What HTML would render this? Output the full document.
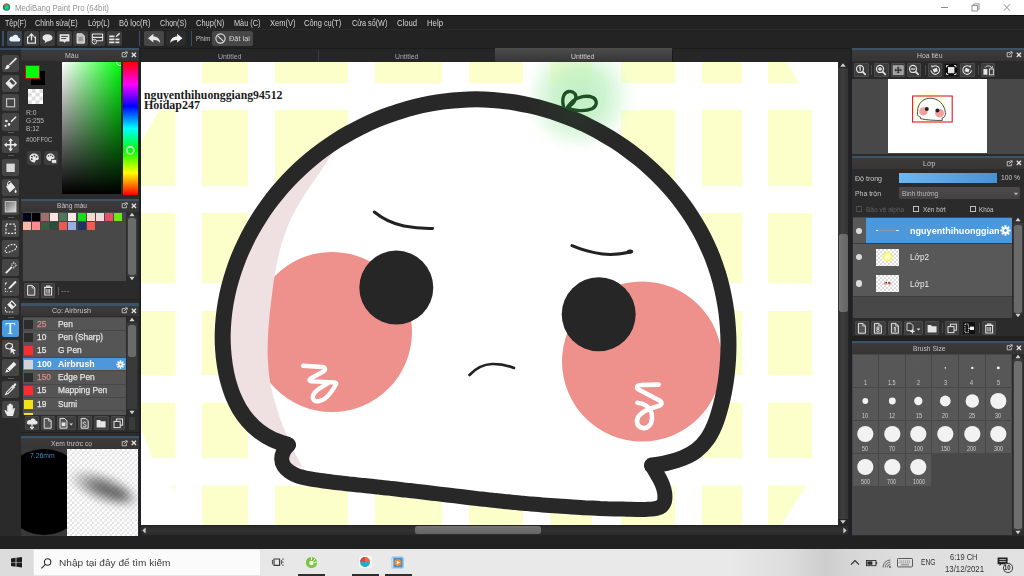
<!DOCTYPE html>
<html><head><meta charset="utf-8"><title>MediBang Paint Pro</title>
<style>
html,body{margin:0;padding:0;background:#222;}
body{width:1024px;height:576px;overflow:hidden;font-family:"Liberation Sans",sans-serif;}
#root{position:relative;width:1024px;height:576px;overflow:hidden;background:#222222;}
.a{position:absolute;}
.t{position:absolute;white-space:nowrap;line-height:1;}
svg{position:absolute;overflow:visible;}

</style></head>
<body>
<div id="root">
<svg class="a" style="left:0;top:0" width="1024" height="576" viewBox="0 0 1024 576">
<defs>
<clipPath id="cv"><rect x="141" y="62" width="697" height="463"/></clipPath>
<clipPath id="yc"><polygon points="190,62 787,62 816,112 830,200 830,440 806.4,485.5 781.2,525 180,525 175,489 170,485.5 152,457 141,429 141,141.7 158.8,110.4 176.4,83"/></clipPath>
<radialGradient id="glow" cx="0.5" cy="0.5" r="0.5"><stop offset="0" stop-color="#c8f5ca" stop-opacity="0.85"/><stop offset="0.42" stop-color="#ccf6ce" stop-opacity="0.78"/><stop offset="0.68" stop-color="#d0f7d2" stop-opacity="0.42"/><stop offset="0.88" stop-color="#d6f8d8" stop-opacity="0.1"/><stop offset="1" stop-color="#d8f8da" stop-opacity="0"/></radialGradient>
<radialGradient id="glow2" cx="0.5" cy="0.5" r="0.5"><stop offset="0" stop-color="#28a03a" stop-opacity="0.10"/><stop offset="0.5" stop-color="#28a03a" stop-opacity="0.06"/><stop offset="1" stop-color="#28a03a" stop-opacity="0"/></radialGradient>
</defs>
<g clip-path="url(#cv)">
<rect x="141" y="62" width="697" height="463" fill="#ffffff"/>
<g clip-path="url(#yc)" fill="#fdffcb">
<rect x="141.0" y="62.0" width="34.5" height="21.0"/>
<rect x="141.0" y="110.0" width="34.5" height="76.0"/>
<rect x="141.0" y="213.0" width="34.5" height="70.0"/>
<rect x="141.0" y="311.0" width="34.5" height="64.0"/>
<rect x="141.0" y="402.5" width="34.5" height="55.5"/>
<rect x="141.0" y="485.5" width="34.5" height="39.5"/>
<rect x="202.0" y="62.0" width="46.0" height="21.0"/>
<rect x="202.0" y="110.0" width="46.0" height="76.0"/>
<rect x="202.0" y="213.0" width="46.0" height="70.0"/>
<rect x="202.0" y="311.0" width="46.0" height="64.0"/>
<rect x="202.0" y="402.5" width="46.0" height="55.5"/>
<rect x="202.0" y="485.5" width="46.0" height="39.5"/>
<rect x="275.0" y="62.0" width="73.0" height="21.0"/>
<rect x="275.0" y="110.0" width="73.0" height="76.0"/>
<rect x="275.0" y="213.0" width="73.0" height="70.0"/>
<rect x="275.0" y="311.0" width="73.0" height="64.0"/>
<rect x="275.0" y="402.5" width="73.0" height="55.5"/>
<rect x="275.0" y="485.5" width="73.0" height="39.5"/>
<rect x="375.0" y="62.0" width="67.0" height="21.0"/>
<rect x="375.0" y="110.0" width="67.0" height="76.0"/>
<rect x="375.0" y="213.0" width="67.0" height="70.0"/>
<rect x="375.0" y="311.0" width="67.0" height="64.0"/>
<rect x="375.0" y="402.5" width="67.0" height="55.5"/>
<rect x="375.0" y="485.5" width="67.0" height="39.5"/>
<rect x="469.0" y="62.0" width="54.0" height="21.0"/>
<rect x="469.0" y="110.0" width="54.0" height="76.0"/>
<rect x="469.0" y="213.0" width="54.0" height="70.0"/>
<rect x="469.0" y="311.0" width="54.0" height="64.0"/>
<rect x="469.0" y="402.5" width="54.0" height="55.5"/>
<rect x="469.0" y="485.5" width="54.0" height="39.5"/>
<rect x="550.0" y="62.0" width="42.0" height="21.0"/>
<rect x="550.0" y="110.0" width="42.0" height="76.0"/>
<rect x="550.0" y="213.0" width="42.0" height="70.0"/>
<rect x="550.0" y="311.0" width="42.0" height="64.0"/>
<rect x="550.0" y="402.5" width="42.0" height="55.5"/>
<rect x="550.0" y="485.5" width="42.0" height="39.5"/>
<rect x="621.0" y="62.0" width="54.0" height="21.0"/>
<rect x="621.0" y="110.0" width="54.0" height="76.0"/>
<rect x="621.0" y="213.0" width="54.0" height="70.0"/>
<rect x="621.0" y="311.0" width="54.0" height="64.0"/>
<rect x="621.0" y="402.5" width="54.0" height="55.5"/>
<rect x="621.0" y="485.5" width="54.0" height="39.5"/>
<rect x="702.0" y="62.0" width="40.0" height="21.0"/>
<rect x="702.0" y="110.0" width="40.0" height="76.0"/>
<rect x="702.0" y="213.0" width="40.0" height="70.0"/>
<rect x="702.0" y="311.0" width="40.0" height="64.0"/>
<rect x="702.0" y="402.5" width="40.0" height="55.5"/>
<rect x="702.0" y="485.5" width="40.0" height="39.5"/>
<rect x="768.0" y="62.0" width="44.0" height="21.0"/>
<rect x="768.0" y="110.0" width="44.0" height="76.0"/>
<rect x="768.0" y="213.0" width="44.0" height="70.0"/>
<rect x="768.0" y="311.0" width="44.0" height="64.0"/>
<rect x="768.0" y="402.5" width="44.0" height="55.5"/>
<rect x="768.0" y="485.5" width="44.0" height="39.5"/>
</g>
<path d="M288.0,445.0 C285.4,444.1 277.4,441.7 272.6,439.5 C267.8,437.2 263.2,434.4 259.2,431.4 C255.1,428.3 251.4,424.7 248.2,421.0 C244.9,417.2 242.0,413.1 239.4,408.8 C236.9,404.5 234.7,399.8 232.7,395.1 C230.8,390.4 229.3,385.4 227.9,380.4 C226.6,375.4 225.6,370.3 224.8,365.1 C224.0,360.0 223.4,354.7 223.1,349.5 C222.7,344.4 222.6,339.1 222.7,333.9 C222.8,328.8 223.1,323.6 223.6,318.4 C224.1,313.2 224.8,308.0 225.7,302.9 C226.6,297.8 227.7,292.7 228.9,287.7 C230.2,282.6 231.6,277.6 233.2,272.7 C234.8,267.7 236.6,262.8 238.5,258.0 C240.4,253.2 242.5,248.4 244.8,243.8 C247.0,239.1 249.3,234.5 251.9,230.0 C254.4,225.5 257.0,221.1 259.8,216.8 C262.6,212.4 265.5,208.2 268.5,204.1 C271.6,199.9 274.7,195.9 278.0,192.0 C281.3,188.0 284.7,184.2 288.2,180.5 C291.8,176.7 295.4,173.1 299.1,169.6 C302.9,166.1 306.8,162.7 310.7,159.4 C314.7,156.1 318.8,152.9 322.9,149.9 C327.1,146.8 331.4,143.9 335.7,141.1 C340.1,138.3 344.5,135.6 349.1,133.1 C353.6,130.6 358.2,128.1 362.9,125.9 C367.6,123.6 372.4,121.4 377.2,119.4 C382.0,117.4 386.9,115.6 391.9,113.9 C396.8,112.1 401.8,110.6 406.8,109.1 C411.8,107.7 416.9,106.4 422.0,105.3 C427.1,104.2 432.3,103.2 437.4,102.4 C442.6,101.6 447.8,101.0 452.9,100.5 C458.1,100.0 463.3,99.7 468.5,99.5 C473.7,99.3 478.9,99.3 484.1,99.5 C489.2,99.7 494.4,100.0 499.6,100.6 C504.7,101.1 509.8,101.7 514.9,102.5 C520.0,103.4 525.1,104.4 530.2,105.5 C535.2,106.6 540.2,107.9 545.2,109.4 C550.2,110.8 555.1,112.4 560.0,114.1 C564.8,115.8 569.7,117.7 574.4,119.7 C579.2,121.7 583.9,123.9 588.5,126.1 C593.2,128.4 597.8,130.8 602.2,133.4 C606.7,135.9 611.2,138.6 615.5,141.4 C619.8,144.2 624.1,147.1 628.3,150.2 C632.4,153.2 636.5,156.4 640.5,159.7 C644.5,163.0 648.3,166.4 652.1,169.9 C655.9,173.4 659.5,177.0 663.1,180.7 C666.6,184.4 670.1,188.3 673.4,192.2 C676.7,196.1 679.9,200.2 682.9,204.3 C686.0,208.4 688.9,212.7 691.7,217.0 C694.5,221.3 697.1,225.7 699.6,230.2 C702.1,234.7 704.5,239.3 706.6,244.0 C708.8,248.6 710.9,253.4 712.8,258.2 C714.6,263.1 716.3,268.0 717.9,272.9 C719.4,277.9 720.8,283.0 722.0,288.1 C723.2,293.2 724.2,298.4 725.1,303.6 C726.0,308.8 726.7,314.0 727.2,319.2 C727.7,324.5 728.1,329.8 728.3,335.0 C728.5,340.3 728.5,345.6 728.4,350.8 C728.3,356.1 728.0,361.4 727.5,366.6 C727.1,371.8 726.5,376.9 725.7,382.1 C724.9,387.2 724.0,392.3 722.9,397.3 C721.8,402.3 720.6,407.2 719.1,412.1 C717.7,416.9 716.2,421.7 714.2,426.2 C712.2,430.7 710.1,435.1 707.2,439.1 C704.4,443.0 701.2,446.8 697.1,449.9 C693.1,453.1 688.0,455.8 682.9,458.0 C677.8,460.1 671.6,461.8 666.4,463.0 C661.3,464.3 654.4,465.1 652.0,465.5 L652.0,465.5 C652.6,466.6 654.5,469.9 655.8,472.1 C657.1,474.3 658.4,476.5 659.6,478.7 C660.8,481.0 661.9,483.2 662.8,485.6 C663.6,488.0 664.4,490.6 664.7,493.2 C665.0,495.8 665.1,498.9 664.5,501.2 C663.8,503.4 662.5,505.5 660.7,506.7 C658.9,508.0 656.2,508.5 653.6,508.9 C651.1,509.3 648.1,509.3 645.4,509.4 C642.8,509.5 640.1,509.5 637.6,509.4 C635.0,509.4 632.5,509.4 630.0,509.3 C627.5,509.3 625.0,509.2 622.5,509.1 C620.0,509.1 617.4,509.0 614.9,508.9 C612.4,508.8 609.9,508.7 607.4,508.7 C604.8,508.6 602.3,508.5 599.8,508.4 C597.2,508.2 594.7,508.1 592.2,508.0 C589.6,507.9 587.1,507.8 584.6,507.7 C582.0,507.5 579.5,507.4 576.9,507.2 C574.4,507.1 571.8,507.0 569.3,506.8 C566.7,506.7 564.2,506.5 561.6,506.3 C559.1,506.2 556.5,506.0 554.0,505.8 C551.4,505.6 548.9,505.4 546.3,505.2 C543.8,505.0 541.2,504.8 538.7,504.6 C536.1,504.4 533.6,504.2 531.1,504.0 C528.5,503.8 526.0,503.5 523.4,503.3 C520.9,503.1 518.3,502.8 515.8,502.6 C513.3,502.3 510.7,502.1 508.2,501.8 C505.6,501.6 503.1,501.3 500.6,501.1 C498.0,500.8 495.5,500.5 493.0,500.3 C490.4,500.0 487.9,499.7 485.3,499.4 C482.8,499.1 480.3,498.9 477.7,498.6 C475.2,498.3 472.7,498.0 470.1,497.7 C467.6,497.4 465.1,497.1 462.5,496.8 C460.0,496.5 457.5,496.2 455.0,495.9 C452.4,495.6 449.9,495.3 447.4,495.0 C444.8,494.7 442.3,494.4 439.8,494.1 C437.3,493.8 434.7,493.5 432.2,493.2 C429.7,492.9 427.1,492.6 424.6,492.3 C422.1,492.0 419.6,491.7 417.0,491.4 C414.5,491.1 412.0,490.8 409.4,490.5 C406.9,490.2 404.4,490.0 401.9,489.7 C399.3,489.4 396.8,489.1 394.3,488.8 C391.8,488.5 389.2,488.2 386.7,487.9 C384.2,487.7 381.7,487.4 379.1,487.1 C376.6,486.8 374.1,486.6 371.6,486.3 C369.0,486.1 366.5,485.8 364.0,485.5 C361.4,485.3 358.9,485.0 356.4,484.8 C353.9,484.5 351.3,484.2 348.8,484.0 C346.3,483.7 343.7,483.4 341.2,483.1 C338.7,482.9 336.1,482.6 333.6,482.3 C331.0,481.9 328.5,481.6 326.0,481.3 C323.4,480.9 320.9,480.6 318.3,480.2 C315.8,479.8 313.2,479.4 310.7,479.0 C308.1,478.5 305.5,478.1 303.1,477.4 C300.6,476.8 298.1,476.1 295.8,475.1 C293.5,474.1 291.3,473.0 289.3,471.5 C287.3,470.0 285.2,468.2 283.9,466.1 C282.6,464.0 281.7,461.4 281.7,459.0 C281.6,456.5 282.6,453.6 283.6,451.3 C284.7,449.0 287.3,446.0 288.0,445.0Z" fill="#ffffff"/>
<defs><clipPath id="bodyclip"><path d="M288.0,445.0 C285.4,444.1 277.4,441.7 272.6,439.5 C267.8,437.2 263.2,434.4 259.2,431.4 C255.1,428.3 251.4,424.7 248.2,421.0 C244.9,417.2 242.0,413.1 239.4,408.8 C236.9,404.5 234.7,399.8 232.7,395.1 C230.8,390.4 229.3,385.4 227.9,380.4 C226.6,375.4 225.6,370.3 224.8,365.1 C224.0,360.0 223.4,354.7 223.1,349.5 C222.7,344.4 222.6,339.1 222.7,333.9 C222.8,328.8 223.1,323.6 223.6,318.4 C224.1,313.2 224.8,308.0 225.7,302.9 C226.6,297.8 227.7,292.7 228.9,287.7 C230.2,282.6 231.6,277.6 233.2,272.7 C234.8,267.7 236.6,262.8 238.5,258.0 C240.4,253.2 242.5,248.4 244.8,243.8 C247.0,239.1 249.3,234.5 251.9,230.0 C254.4,225.5 257.0,221.1 259.8,216.8 C262.6,212.4 265.5,208.2 268.5,204.1 C271.6,199.9 274.7,195.9 278.0,192.0 C281.3,188.0 284.7,184.2 288.2,180.5 C291.8,176.7 295.4,173.1 299.1,169.6 C302.9,166.1 306.8,162.7 310.7,159.4 C314.7,156.1 318.8,152.9 322.9,149.9 C327.1,146.8 331.4,143.9 335.7,141.1 C340.1,138.3 344.5,135.6 349.1,133.1 C353.6,130.6 358.2,128.1 362.9,125.9 C367.6,123.6 372.4,121.4 377.2,119.4 C382.0,117.4 386.9,115.6 391.9,113.9 C396.8,112.1 401.8,110.6 406.8,109.1 C411.8,107.7 416.9,106.4 422.0,105.3 C427.1,104.2 432.3,103.2 437.4,102.4 C442.6,101.6 447.8,101.0 452.9,100.5 C458.1,100.0 463.3,99.7 468.5,99.5 C473.7,99.3 478.9,99.3 484.1,99.5 C489.2,99.7 494.4,100.0 499.6,100.6 C504.7,101.1 509.8,101.7 514.9,102.5 C520.0,103.4 525.1,104.4 530.2,105.5 C535.2,106.6 540.2,107.9 545.2,109.4 C550.2,110.8 555.1,112.4 560.0,114.1 C564.8,115.8 569.7,117.7 574.4,119.7 C579.2,121.7 583.9,123.9 588.5,126.1 C593.2,128.4 597.8,130.8 602.2,133.4 C606.7,135.9 611.2,138.6 615.5,141.4 C619.8,144.2 624.1,147.1 628.3,150.2 C632.4,153.2 636.5,156.4 640.5,159.7 C644.5,163.0 648.3,166.4 652.1,169.9 C655.9,173.4 659.5,177.0 663.1,180.7 C666.6,184.4 670.1,188.3 673.4,192.2 C676.7,196.1 679.9,200.2 682.9,204.3 C686.0,208.4 688.9,212.7 691.7,217.0 C694.5,221.3 697.1,225.7 699.6,230.2 C702.1,234.7 704.5,239.3 706.6,244.0 C708.8,248.6 710.9,253.4 712.8,258.2 C714.6,263.1 716.3,268.0 717.9,272.9 C719.4,277.9 720.8,283.0 722.0,288.1 C723.2,293.2 724.2,298.4 725.1,303.6 C726.0,308.8 726.7,314.0 727.2,319.2 C727.7,324.5 728.1,329.8 728.3,335.0 C728.5,340.3 728.5,345.6 728.4,350.8 C728.3,356.1 728.0,361.4 727.5,366.6 C727.1,371.8 726.5,376.9 725.7,382.1 C724.9,387.2 724.0,392.3 722.9,397.3 C721.8,402.3 720.6,407.2 719.1,412.1 C717.7,416.9 716.2,421.7 714.2,426.2 C712.2,430.7 710.1,435.1 707.2,439.1 C704.4,443.0 701.2,446.8 697.1,449.9 C693.1,453.1 688.0,455.8 682.9,458.0 C677.8,460.1 671.6,461.8 666.4,463.0 C661.3,464.3 654.4,465.1 652.0,465.5 L652.0,465.5 C652.6,466.6 654.5,469.9 655.8,472.1 C657.1,474.3 658.4,476.5 659.6,478.7 C660.8,481.0 661.9,483.2 662.8,485.6 C663.6,488.0 664.4,490.6 664.7,493.2 C665.0,495.8 665.1,498.9 664.5,501.2 C663.8,503.4 662.5,505.5 660.7,506.7 C658.9,508.0 656.2,508.5 653.6,508.9 C651.1,509.3 648.1,509.3 645.4,509.4 C642.8,509.5 640.1,509.5 637.6,509.4 C635.0,509.4 632.5,509.4 630.0,509.3 C627.5,509.3 625.0,509.2 622.5,509.1 C620.0,509.1 617.4,509.0 614.9,508.9 C612.4,508.8 609.9,508.7 607.4,508.7 C604.8,508.6 602.3,508.5 599.8,508.4 C597.2,508.2 594.7,508.1 592.2,508.0 C589.6,507.9 587.1,507.8 584.6,507.7 C582.0,507.5 579.5,507.4 576.9,507.2 C574.4,507.1 571.8,507.0 569.3,506.8 C566.7,506.7 564.2,506.5 561.6,506.3 C559.1,506.2 556.5,506.0 554.0,505.8 C551.4,505.6 548.9,505.4 546.3,505.2 C543.8,505.0 541.2,504.8 538.7,504.6 C536.1,504.4 533.6,504.2 531.1,504.0 C528.5,503.8 526.0,503.5 523.4,503.3 C520.9,503.1 518.3,502.8 515.8,502.6 C513.3,502.3 510.7,502.1 508.2,501.8 C505.6,501.6 503.1,501.3 500.6,501.1 C498.0,500.8 495.5,500.5 493.0,500.3 C490.4,500.0 487.9,499.7 485.3,499.4 C482.8,499.1 480.3,498.9 477.7,498.6 C475.2,498.3 472.7,498.0 470.1,497.7 C467.6,497.4 465.1,497.1 462.5,496.8 C460.0,496.5 457.5,496.2 455.0,495.9 C452.4,495.6 449.9,495.3 447.4,495.0 C444.8,494.7 442.3,494.4 439.8,494.1 C437.3,493.8 434.7,493.5 432.2,493.2 C429.7,492.9 427.1,492.6 424.6,492.3 C422.1,492.0 419.6,491.7 417.0,491.4 C414.5,491.1 412.0,490.8 409.4,490.5 C406.9,490.2 404.4,490.0 401.9,489.7 C399.3,489.4 396.8,489.1 394.3,488.8 C391.8,488.5 389.2,488.2 386.7,487.9 C384.2,487.7 381.7,487.4 379.1,487.1 C376.6,486.8 374.1,486.6 371.6,486.3 C369.0,486.1 366.5,485.8 364.0,485.5 C361.4,485.3 358.9,485.0 356.4,484.8 C353.9,484.5 351.3,484.2 348.8,484.0 C346.3,483.7 343.7,483.4 341.2,483.1 C338.7,482.9 336.1,482.6 333.6,482.3 C331.0,481.9 328.5,481.6 326.0,481.3 C323.4,480.9 320.9,480.6 318.3,480.2 C315.8,479.8 313.2,479.4 310.7,479.0 C308.1,478.5 305.5,478.1 303.1,477.4 C300.6,476.8 298.1,476.1 295.8,475.1 C293.5,474.1 291.3,473.0 289.3,471.5 C287.3,470.0 285.2,468.2 283.9,466.1 C282.6,464.0 281.7,461.4 281.7,459.0 C281.6,456.5 282.6,453.6 283.6,451.3 C284.7,449.0 287.3,446.0 288.0,445.0Z"/></clipPath></defs>
<g clip-path="url(#bodyclip)">
<circle cx="332" cy="332" r="80" fill="#ee918c"/>
<circle cx="642" cy="361.5" r="80" fill="#ee918c"/>
<path d="M340.0,140.0 C339.0,141.7 336.1,147.0 334.0,150.5 C331.9,153.9 329.8,157.4 327.6,160.8 C325.4,164.2 323.1,167.5 320.8,170.9 C318.5,174.2 316.2,177.6 313.9,180.9 C311.6,184.3 309.3,187.7 307.1,191.1 C304.8,194.4 302.6,197.8 300.5,201.3 C298.5,204.8 296.4,208.2 294.5,211.8 C292.7,215.3 290.9,218.9 289.3,222.5 C287.7,226.2 286.2,229.9 284.9,233.7 C283.5,237.4 282.3,241.3 281.2,245.1 C280.1,249.0 279.2,252.9 278.3,256.8 C277.4,260.8 276.6,264.7 275.8,268.7 C275.1,272.7 274.4,276.7 273.8,280.8 C273.2,284.8 272.7,288.8 272.2,292.9 C271.7,296.9 271.2,301.0 270.7,305.0 C270.3,309.1 269.8,313.1 269.4,317.2 C269.1,321.2 268.7,325.3 268.4,329.3 C268.1,333.3 267.9,337.3 267.8,341.4 C267.6,345.4 267.6,349.4 267.6,353.4 C267.7,357.4 267.9,361.4 268.2,365.4 C268.5,369.4 268.9,373.4 269.4,377.4 C270.0,381.3 270.7,385.3 271.6,389.3 C272.4,393.2 273.4,397.2 274.5,401.1 C275.6,405.0 276.8,408.9 278.1,412.8 C279.4,416.7 280.8,420.5 282.2,424.3 C283.7,428.1 285.3,431.9 286.9,435.6 C288.5,439.4 290.2,443.1 292.0,446.7 C293.7,450.4 295.5,454.0 297.3,457.5 C299.2,461.1 302.1,466.3 303.0,468.0 L282.0,462.0 C282.2,460.3 282.4,454.8 283.4,452.0 C284.4,449.2 289.8,447.1 288.0,445.0 C286.2,442.9 277.4,441.7 272.6,439.5 C267.8,437.2 263.2,434.4 259.2,431.4 C255.1,428.3 251.4,424.7 248.2,421.0 C244.9,417.2 242.0,413.1 239.4,408.8 C236.9,404.5 234.7,399.8 232.7,395.1 C230.8,390.4 229.3,385.4 227.9,380.4 C226.6,375.4 225.6,370.3 224.8,365.1 C224.0,360.0 223.4,354.7 223.1,349.5 C222.7,344.4 222.6,339.1 222.7,333.9 C222.8,328.8 223.1,323.6 223.6,318.4 C224.1,313.2 224.8,308.0 225.7,302.9 C226.6,297.8 227.7,292.7 228.9,287.7 C230.2,282.6 231.6,277.6 233.2,272.7 C234.8,267.7 236.6,262.8 238.5,258.0 C240.4,253.2 242.5,248.4 244.8,243.8 C247.0,239.1 249.3,234.5 251.9,230.0 C254.4,225.5 257.0,221.1 259.8,216.8 C262.6,212.4 265.5,208.2 268.5,204.1 C271.6,199.9 274.7,195.9 278.0,192.0 C281.3,188.0 284.7,184.2 288.2,180.5 C291.8,176.7 295.4,173.1 299.1,169.6 C302.9,166.1 306.8,162.7 310.7,159.4 C314.7,156.1 318.8,152.9 322.9,149.9 C327.1,146.8 331.4,143.9 335.7,141.1 C340.1,138.3 344.5,135.6 349.1,133.1 C353.6,130.6 358.2,128.1 362.9,125.9 C367.6,123.6 372.4,121.4 377.2,119.4 C382.0,117.4 386.9,115.6 391.9,113.9 C396.8,112.1 401.8,110.6 406.8,109.1 C411.8,107.7 416.9,106.4 422.0,105.3 C427.1,104.2 434.9,102.9 437.4,102.4Z" fill="#efe0e2"/>
</g>
<circle cx="580" cy="95" r="60" fill="url(#glow)"/>
<path d="M288.0,445.0 C285.4,444.1 277.4,441.7 272.6,439.5 C267.8,437.2 263.2,434.4 259.2,431.4 C255.1,428.3 251.4,424.7 248.2,421.0 C244.9,417.2 242.0,413.1 239.4,408.8 C236.9,404.5 234.7,399.8 232.7,395.1 C230.8,390.4 229.3,385.4 227.9,380.4 C226.6,375.4 225.6,370.3 224.8,365.1 C224.0,360.0 223.4,354.7 223.1,349.5 C222.7,344.4 222.6,339.1 222.7,333.9 C222.8,328.8 223.1,323.6 223.6,318.4 C224.1,313.2 224.8,308.0 225.7,302.9 C226.6,297.8 227.7,292.7 228.9,287.7 C230.2,282.6 231.6,277.6 233.2,272.7 C234.8,267.7 236.6,262.8 238.5,258.0 C240.4,253.2 242.5,248.4 244.8,243.8 C247.0,239.1 249.3,234.5 251.9,230.0 C254.4,225.5 257.0,221.1 259.8,216.8 C262.6,212.4 265.5,208.2 268.5,204.1 C271.6,199.9 274.7,195.9 278.0,192.0 C281.3,188.0 284.7,184.2 288.2,180.5 C291.8,176.7 295.4,173.1 299.1,169.6 C302.9,166.1 306.8,162.7 310.7,159.4 C314.7,156.1 318.8,152.9 322.9,149.9 C327.1,146.8 331.4,143.9 335.7,141.1 C340.1,138.3 344.5,135.6 349.1,133.1 C353.6,130.6 358.2,128.1 362.9,125.9 C367.6,123.6 372.4,121.4 377.2,119.4 C382.0,117.4 386.9,115.6 391.9,113.9 C396.8,112.1 401.8,110.6 406.8,109.1 C411.8,107.7 416.9,106.4 422.0,105.3 C427.1,104.2 432.3,103.2 437.4,102.4 C442.6,101.6 447.8,101.0 452.9,100.5 C458.1,100.0 463.3,99.7 468.5,99.5 C473.7,99.3 478.9,99.3 484.1,99.5 C489.2,99.7 494.4,100.0 499.6,100.6 C504.7,101.1 509.8,101.7 514.9,102.5 C520.0,103.4 525.1,104.4 530.2,105.5 C535.2,106.6 540.2,107.9 545.2,109.4 C550.2,110.8 555.1,112.4 560.0,114.1 C564.8,115.8 569.7,117.7 574.4,119.7 C579.2,121.7 583.9,123.9 588.5,126.1 C593.2,128.4 597.8,130.8 602.2,133.4 C606.7,135.9 611.2,138.6 615.5,141.4 C619.8,144.2 624.1,147.1 628.3,150.2 C632.4,153.2 636.5,156.4 640.5,159.7 C644.5,163.0 648.3,166.4 652.1,169.9 C655.9,173.4 659.5,177.0 663.1,180.7 C666.6,184.4 670.1,188.3 673.4,192.2 C676.7,196.1 679.9,200.2 682.9,204.3 C686.0,208.4 688.9,212.7 691.7,217.0 C694.5,221.3 697.1,225.7 699.6,230.2 C702.1,234.7 704.5,239.3 706.6,244.0 C708.8,248.6 710.9,253.4 712.8,258.2 C714.6,263.1 716.3,268.0 717.9,272.9 C719.4,277.9 720.8,283.0 722.0,288.1 C723.2,293.2 724.2,298.4 725.1,303.6 C726.0,308.8 726.7,314.0 727.2,319.2 C727.7,324.5 728.1,329.8 728.3,335.0 C728.5,340.3 728.5,345.6 728.4,350.8 C728.3,356.1 728.0,361.4 727.5,366.6 C727.1,371.8 726.5,376.9 725.7,382.1 C724.9,387.2 724.0,392.3 722.9,397.3 C721.8,402.3 720.6,407.2 719.1,412.1 C717.7,416.9 716.2,421.7 714.2,426.2 C712.2,430.7 710.1,435.1 707.2,439.1 C704.4,443.0 701.2,446.8 697.1,449.9 C693.1,453.1 688.0,455.8 682.9,458.0 C677.8,460.1 671.6,461.8 666.4,463.0 C661.3,464.3 654.4,465.1 652.0,465.5" fill="none" stroke="#282828" stroke-width="16" stroke-linejoin="round" stroke-linecap="round"/>
<path d="M652.0,465.5 C652.6,466.6 654.5,469.9 655.8,472.1 C657.1,474.3 658.4,476.5 659.6,478.7 C660.8,481.0 661.9,483.2 662.8,485.6 C663.6,488.0 664.4,490.6 664.7,493.2 C665.0,495.8 665.1,498.9 664.5,501.2 C663.8,503.4 662.5,505.5 660.7,506.7 C658.9,508.0 656.2,508.5 653.6,508.9 C651.1,509.3 648.1,509.3 645.4,509.4 C642.8,509.5 640.1,509.5 637.6,509.4 C635.0,509.4 632.5,509.4 630.0,509.3 C627.5,509.3 625.0,509.2 622.5,509.1 C620.0,509.1 617.4,509.0 614.9,508.9 C612.4,508.8 609.9,508.7 607.4,508.7 C604.8,508.6 602.3,508.5 599.8,508.4 C597.2,508.2 594.7,508.1 592.2,508.0 C589.6,507.9 587.1,507.8 584.6,507.7 C582.0,507.5 579.5,507.4 576.9,507.2 C574.4,507.1 571.8,507.0 569.3,506.8 C566.7,506.7 564.2,506.5 561.6,506.3 C559.1,506.2 556.5,506.0 554.0,505.8 C551.4,505.6 548.9,505.4 546.3,505.2 C543.8,505.0 541.2,504.8 538.7,504.6 C536.1,504.4 533.6,504.2 531.1,504.0 C528.5,503.8 526.0,503.5 523.4,503.3 C520.9,503.1 518.3,502.8 515.8,502.6 C513.3,502.3 510.7,502.1 508.2,501.8 C505.6,501.6 503.1,501.3 500.6,501.1 C498.0,500.8 495.5,500.5 493.0,500.3 C490.4,500.0 487.9,499.7 485.3,499.4 C482.8,499.1 480.3,498.9 477.7,498.6 C475.2,498.3 472.7,498.0 470.1,497.7 C467.6,497.4 465.1,497.1 462.5,496.8 C460.0,496.5 457.5,496.2 455.0,495.9 C452.4,495.6 449.9,495.3 447.4,495.0 C444.8,494.7 442.3,494.4 439.8,494.1 C437.3,493.8 434.7,493.5 432.2,493.2 C429.7,492.9 427.1,492.6 424.6,492.3 C422.1,492.0 419.6,491.7 417.0,491.4 C414.5,491.1 412.0,490.8 409.4,490.5 C406.9,490.2 404.4,490.0 401.9,489.7 C399.3,489.4 396.8,489.1 394.3,488.8 C391.8,488.5 389.2,488.2 386.7,487.9 C384.2,487.7 381.7,487.4 379.1,487.1 C376.6,486.8 374.1,486.6 371.6,486.3 C369.0,486.1 366.5,485.8 364.0,485.5 C361.4,485.3 358.9,485.0 356.4,484.8 C353.9,484.5 351.3,484.2 348.8,484.0 C346.3,483.7 343.7,483.4 341.2,483.1 C338.7,482.9 336.1,482.6 333.6,482.3 C331.0,481.9 328.5,481.6 326.0,481.3 C323.4,480.9 320.9,480.6 318.3,480.2 C315.8,479.8 313.2,479.4 310.7,479.0 C308.1,478.5 305.5,478.1 303.1,477.4 C300.6,476.8 298.1,476.1 295.8,475.1 C293.5,474.1 291.3,473.0 289.3,471.5 C287.3,470.0 285.2,468.2 283.9,466.1 C282.6,464.0 281.7,461.4 281.7,459.0 C281.6,456.5 282.6,453.6 283.6,451.3 C284.7,449.0 287.3,446.0 288.0,445.0" fill="none" stroke="#282828" stroke-width="15" stroke-linejoin="round" stroke-linecap="round"/>
<circle cx="396.3" cy="287.6" r="37" fill="#262626"/>
<circle cx="598.7" cy="314.3" r="37" fill="#262626"/>
<path d="M374.3,212 C383,219 394,224 404,226 C414,228 424,228.6 432.6,228.4" fill="none" stroke="#222" stroke-width="3" stroke-linecap="round"/>
<path d="M572,245.6 C581,249.5 592,252.5 602.5,254 C613,255.3 624,253.5 630.5,252" fill="none" stroke="#222" stroke-width="3" stroke-linecap="round"/>
<ellipse cx="630" cy="251.6" rx="3.2" ry="2.1" fill="#222"/>
<path d="M469.5,375 C476,368 484,364.3 492,364 C500,363.8 508,365.5 514,368" fill="none" stroke="#222" stroke-width="2.6" stroke-linecap="round"/>
<path d="M303.2,365.8 L322,367 C325.5,367.3 326,369.5 323.5,371.5 L311.5,378 C308.5,379.8 309,381.2 312.5,381.4 L334,382.4 C337,382.6 336.5,384 335,386 C333,389.5 330,394.5 325,398.5 C321,401.5 315.5,402.5 313.5,399.5 C311.5,396.5 314,392.5 318,389.5 C321,387.2 325,384.8 328,383.2" fill="none" stroke="#fff" stroke-width="4.4" stroke-linecap="round" stroke-linejoin="round"/>
<path d="M658.6,384.6 L641,385 C637,385 636,387.5 638.5,389.5 L659.5,400.5 C662.5,402.5 662,405 658.5,406 C651,408 642,411.5 638.5,416.5 C635.5,421 637,427 642.5,428 C648,429 651.5,424.5 652,419 C652.5,412.5 649.5,407.5 646,405.5 C643,403.8 640,403 637.4,402.8" fill="none" stroke="#fff" stroke-width="4.6" stroke-linecap="round" stroke-linejoin="round"/>
<circle cx="577" cy="100" r="50" fill="url(#glow2)"/>
<path d="M563.5,106.5 C561.5,98 564,92 569,91.5 C574,91 577,95 575.5,99 C574,103 570.5,106 567,107.5 C573,111 585,111.8 592,108.8 C597.5,106 597.5,100 593,97.5 C587,95 578,96.5 573,101 C571,103 569,105 567.5,107" fill="none" stroke="#1f4f24" stroke-width="3.3" stroke-linecap="round" stroke-linejoin="round"/>
<text x="144" y="98.6" font-family="Liberation Serif" font-weight="bold" font-size="12.2" fill="#1c1c1c" textLength="138.5" lengthAdjust="spacingAndGlyphs">nguyenthihuonggiang94512</text>
<text x="144" y="108.6" font-family="Liberation Serif" font-weight="bold" font-size="12.2" fill="#1c1c1c" textLength="56" lengthAdjust="spacingAndGlyphs">Hoidap247</text>
</g>
</svg>
<div class="a" style="left:0px;top:0px;width:1024px;height:15px;background:#ffffff;"></div>
<div class="a" style="left:0px;top:15px;width:1024px;height:1px;background:#101010;"></div>
<svg style="left:2px;top:2px" width="11" height="11" viewBox="0 0 11 11"><circle cx="4.5" cy="5.2" r="3.6" fill="#0f8a58"/><path d="M1.4,3.6A3.6,3.6 0 0 1 5.6,1.8L4.5,5.2Z" fill="#e2553c"/><circle cx="4.8" cy="5.5" r="2.2" fill="#1fc08e"/><path d="M3.6,6.6C4,4.8 5,4 6.4,3.9" fill="none" stroke="#38d8b0" stroke-width="0.9"/></svg>
<div class="t" style="left:15.00px;top:3.62px;font-size:8.6px;color:#939393;transform:scaleX(0.9104);transform-origin:0 0;">MediBang Paint Pro (64bit)</div>
<div class="a" style="left:941px;top:7px;width:7px;height:1px;background:#8a8a8a;"></div>
<svg style="left:971px;top:3px" width="9" height="9" viewBox="0 0 9 9"><rect x="1" y="2.5" width="5.5" height="5.5" fill="none" stroke="#8a8a8a" stroke-width="0.9"/><path d="M2.8,2.5V0.9H8.1V6.2H6.5" fill="none" stroke="#8a8a8a" stroke-width="0.9"/></svg>
<svg style="left:1003px;top:3px" width="8" height="9" viewBox="0 0 8 9"><path d="M0.8,1.2L7,7.8M7,1.2L0.8,7.8" stroke="#8a8a8a" stroke-width="0.9"/></svg>
<div class="a" style="left:0px;top:16px;width:1024px;height:13px;background:#222222;"></div>
<div class="a" style="left:0px;top:29px;width:1024px;height:1px;background:#2a2a2a;"></div>
<div class="t" style="left:4.50px;top:18.79px;font-size:8.4px;color:#d6d6d6;transform:scaleX(0.8477);transform-origin:0 0;">Tệp(F)</div>
<div class="t" style="left:35.00px;top:18.79px;font-size:8.4px;color:#d6d6d6;transform:scaleX(0.8550);transform-origin:0 0;">Chỉnh sửa(E)</div>
<div class="t" style="left:87.50px;top:18.79px;font-size:8.4px;color:#d6d6d6;transform:scaleX(0.8698);transform-origin:0 0;">Lớp(L)</div>
<div class="t" style="left:118.70px;top:18.79px;font-size:8.4px;color:#d6d6d6;transform:scaleX(0.9043);transform-origin:0 0;">Bộ lọc(R)</div>
<div class="t" style="left:159.50px;top:18.79px;font-size:8.4px;color:#d6d6d6;transform:scaleX(0.8537);transform-origin:0 0;">Chọn(S)</div>
<div class="t" style="left:195.70px;top:18.79px;font-size:8.4px;color:#d6d6d6;transform:scaleX(0.8963);transform-origin:0 0;">Chụp(N)</div>
<div class="t" style="left:233.70px;top:18.79px;font-size:8.4px;color:#d6d6d6;transform:scaleX(0.8739);transform-origin:0 0;">Màu (C)</div>
<div class="t" style="left:269.70px;top:18.79px;font-size:8.4px;color:#d6d6d6;transform:scaleX(0.8970);transform-origin:0 0;">Xem(V)</div>
<div class="t" style="left:304.20px;top:18.79px;font-size:8.4px;color:#d6d6d6;transform:scaleX(0.8898);transform-origin:0 0;">Công cụ(T)</div>
<div class="t" style="left:351.50px;top:18.79px;font-size:8.4px;color:#d6d6d6;transform:scaleX(0.8626);transform-origin:0 0;">Cửa sổ(W)</div>
<div class="t" style="left:396.50px;top:18.79px;font-size:8.4px;color:#d6d6d6;transform:scaleX(0.9158);transform-origin:0 0;">Cloud</div>
<div class="t" style="left:426.50px;top:18.79px;font-size:8.4px;color:#d6d6d6;transform:scaleX(0.9274);transform-origin:0 0;">Help</div>
<div class="a" style="left:0px;top:30px;width:1024px;height:18px;background:#232323;"></div>
<div class="a" style="left:2px;top:31px;width:1.5px;height:15px;background:#34506a;"></div>
<div class="a" style="left:7px;top:31px;width:15px;height:15px;background:#3d3d3d;border-radius:2px;"></div>
<div class="a" style="left:23.6px;top:31px;width:15px;height:15px;background:#3d3d3d;border-radius:2px;"></div>
<div class="a" style="left:40.2px;top:31px;width:15px;height:15px;background:#3d3d3d;border-radius:2px;"></div>
<div class="a" style="left:56.8px;top:31px;width:15px;height:15px;background:#3d3d3d;border-radius:2px;"></div>
<div class="a" style="left:73.4px;top:31px;width:15px;height:15px;background:#3d3d3d;border-radius:2px;"></div>
<div class="a" style="left:90px;top:31px;width:15px;height:15px;background:#3d3d3d;border-radius:2px;"></div>
<div class="a" style="left:106.6px;top:31px;width:15px;height:15px;background:#3d3d3d;border-radius:2px;"></div>
<svg style="left:7px;top:31px" width="15" height="15" viewBox="0 0 15 15"><rect x="0" y="0" width="15" height="15" rx="2" fill="#3a4652"/><path d="M4.2,10.6 h6.9 a2.1,2.1 0 0 0 .3,-4.2 a3,3 0 0 0 -5.7,-.8 a2.5,2.5 0 0 0 -1.5,5z" fill="#eaf2fb"/></svg>
<svg style="left:23.6px;top:31px" width="15" height="15" viewBox="0 0 15 15"><path d="M5.2,6.2H3.6V12.2H11.4V6.2H9.8" fill="none" stroke="#e6e6e6" stroke-width="1.2"/><path d="M7.5,9.6V3.4M5.3,5.4L7.5,3L9.7,5.4" fill="none" stroke="#e6e6e6" stroke-width="1.3"/></svg>
<svg style="left:40.2px;top:31px" width="15" height="15" viewBox="0 0 15 15"><ellipse cx="7.5" cy="6.8" rx="5" ry="3.6" fill="#e6e6e6"/><path d="M5.2,9.2L4.6,12.2L8,9.8Z" fill="#e6e6e6"/></svg>
<svg style="left:56.8px;top:31px" width="15" height="15" viewBox="0 0 15 15"><path d="M2.6,3.2H12.4V10.4H8.8L7.5,12L6.2,10.4H2.6Z" fill="#e6e6e6"/><path d="M4.2,5.4H10.8M4.2,7.6H9.2" stroke="#3d3d3d" stroke-width="1"/></svg>
<svg style="left:73.4px;top:31px" width="15" height="15" viewBox="0 0 15 15"><path d="M4,2.8H9.2L11.4,5V12.2H4Z" fill="#bdbdbd" stroke="#e6e6e6" stroke-width="0.9"/><path d="M5.6,7H9.8M5.6,9H9.8" stroke="#6a6a6a" stroke-width="0.9"/></svg>
<svg style="left:90px;top:31px" width="15" height="15" viewBox="0 0 15 15"><path d="M2.4,3H12.6M2.4,6.4H12.6M2.4,9.8H12.6M2.4,3V9.8M12.6,3V9.8" fill="none" stroke="#e6e6e6" stroke-width="1.1"/><circle cx="4.4" cy="10.6" r="2.3" fill="#3d3d3d" stroke="#e6e6e6" stroke-width="0.9"/><path d="M4.4,9.4V10.7H5.4" stroke="#e6e6e6" stroke-width="0.7" fill="none"/></svg>
<svg style="left:106.6px;top:31px" width="15" height="15" viewBox="0 0 15 15"><path d="M2.2,4.4H7.4V6.2H2.2ZM2.2,7.4H7.4V9.2H2.2ZM2.2,10.4H7.4V12.2H2.2ZM8.4,7.4H12.4V9.2H8.4ZM8.4,10.4H12.4V12.2H8.4Z" fill="#e6e6e6"/><path d="M8.6,6.2L9.2,4.4L12.2,1.8L13.2,2.9L10.2,5.6Z" fill="#e6e6e6"/></svg>
<div class="a" style="left:138.5px;top:31px;width:1.5px;height:15px;background:#34506a;"></div>
<div class="a" style="left:144px;top:31px;width:20px;height:15px;background:#474747;border-radius:2px;"></div>
<div class="a" style="left:165.5px;top:31px;width:20.5px;height:15px;background:#2c2c2c;border-radius:2px;"></div>
<svg style="left:144px;top:31px" width="20" height="15" viewBox="0 0 20 15"><path d="M4,7.2L9.4,2.8V5.4C13.6,5.4 16,7.8 16.2,12C14.6,9.6 12.4,8.8 9.4,9V11.6Z" fill="#e6e6e6"/></svg>
<svg style="left:165.5px;top:31px" width="20.5" height="15" viewBox="0 0 20.5 15"><path d="M16.5,7.2L11.1,2.8V5.4C6.9,5.4 4.5,7.8 4.3,12C5.9,9.6 8.1,8.8 11.1,9V11.6Z" fill="#f2f2f2"/></svg>
<div class="a" style="left:190.5px;top:31px;width:1.5px;height:15px;background:#34506a;"></div>
<div class="t" style="left:196.00px;top:35.17px;font-size:7.6px;color:#c8c8c8;transform:scaleX(0.8175);transform-origin:0 0;">Phím</div>
<div class="a" style="left:212px;top:31px;width:40.5px;height:15px;background:#474747;border-radius:2px;"></div>
<svg style="left:213.5px;top:32px" width="13" height="13" viewBox="0 0 13 13"><circle cx="6.5" cy="6.5" r="4.6" fill="none" stroke="#e0e0e0" stroke-width="1.1"/><path d="M3.3,3.3L9.7,9.7" stroke="#e0e0e0" stroke-width="1.1"/></svg>
<div class="t" style="left:228.50px;top:35.17px;font-size:7.6px;color:#d0d0d0;transform:scaleX(0.9749);transform-origin:0 0;">Đặt lại</div>
<div class="a" style="left:0px;top:48px;width:21px;height:488px;background:#2a2a2a;"></div>
<div class="a" style="left:0px;top:48px;width:21px;height:2px;background:#33485c;"></div>
<div class="a" style="left:2.2px;top:55px;width:17.2px;height:17.4px;background:#454545;border-radius:2px;"></div>
<div class="a" style="left:2.2px;top:74.5px;width:17.2px;height:17.4px;background:#454545;border-radius:2px;"></div>
<div class="a" style="left:2.2px;top:94px;width:17.2px;height:17.4px;background:#454545;border-radius:2px;"></div>
<div class="a" style="left:2.2px;top:113.2px;width:17.2px;height:17.4px;background:#454545;border-radius:2px;"></div>
<div class="a" style="left:2.2px;top:136px;width:17.2px;height:17.4px;background:#454545;border-radius:2px;"></div>
<div class="a" style="left:2.2px;top:159px;width:17.2px;height:17.4px;background:#454545;border-radius:2px;"></div>
<div class="a" style="left:2.2px;top:178.5px;width:17.2px;height:17.4px;background:#454545;border-radius:2px;"></div>
<div class="a" style="left:2.2px;top:198px;width:17.2px;height:17.4px;background:#454545;border-radius:2px;"></div>
<div class="a" style="left:2.2px;top:220px;width:17.2px;height:17.4px;background:#454545;border-radius:2px;"></div>
<div class="a" style="left:2.2px;top:239.5px;width:17.2px;height:17.4px;background:#454545;border-radius:2px;"></div>
<div class="a" style="left:2.2px;top:259px;width:17.2px;height:17.4px;background:#454545;border-radius:2px;"></div>
<div class="a" style="left:2.2px;top:278.3px;width:17.2px;height:17.4px;background:#454545;border-radius:2px;"></div>
<div class="a" style="left:2.2px;top:297.6px;width:17.2px;height:17.4px;background:#454545;border-radius:2px;"></div>
<div class="a" style="left:2.2px;top:319.6px;width:17.2px;height:17.4px;background:#4b9be0;border-radius:2px;"></div>
<div class="a" style="left:2.2px;top:339.5px;width:17.2px;height:17.4px;background:#454545;border-radius:2px;"></div>
<div class="a" style="left:2.2px;top:359px;width:17.2px;height:17.4px;background:#454545;border-radius:2px;"></div>
<div class="a" style="left:2.2px;top:381px;width:17.2px;height:17.4px;background:#454545;border-radius:2px;"></div>
<div class="a" style="left:2.2px;top:400.5px;width:17.2px;height:17.4px;background:#454545;border-radius:2px;"></div>
<div class="a" style="left:8px;top:132.4px;width:5.5px;height:1px;background:#5a5a5a;"></div>
<div class="a" style="left:8px;top:155.3px;width:5.5px;height:1px;background:#5a5a5a;"></div>
<div class="a" style="left:8px;top:217px;width:5.5px;height:1px;background:#5a5a5a;"></div>
<div class="a" style="left:8px;top:316.6px;width:5.5px;height:1px;background:#5a5a5a;"></div>
<div class="a" style="left:8px;top:378.3px;width:5.5px;height:1px;background:#5a5a5a;"></div>
<svg style="left:2.2px;top:55px" width="17.2" height="17.4" viewBox="0 0 17.2 17.4"><path d="M13.8,2.6L15,3.8L8,10.6L6.8,9.4Z" fill="#ececec"/><path d="M6.4,9.8L7.8,11.2C7.4,13.4 5,14.6 2.6,14.2C3.8,13.4 3.6,12.2 4.2,11C4.7,10.1 5.6,9.7 6.4,9.8Z" fill="#ececec"/></svg>
<svg style="left:2.2px;top:74.5px" width="17.2" height="17.4" viewBox="0 0 17.2 17.4"><path d="M9.4,3.2L14.2,8L9,13.2L4.2,8.4Z" fill="none" stroke="#ececec" stroke-width="1.3" stroke-linejoin="round"/><path d="M4.2,8.4L6.8,5.8L11.6,10.6L9,13.2Z" fill="#ececec"/></svg>
<svg style="left:2.2px;top:94px" width="17.2" height="17.4" viewBox="0 0 17.2 17.4"><rect x="4.6" y="4.8" width="8" height="8" fill="none" stroke="#cfcfcf" stroke-width="1.1"/></svg>
<svg style="left:2.2px;top:113.2px" width="17.2" height="17.4" viewBox="0 0 17.2 17.4"><path d="M13.6,3.2L14.6,4.2L9.6,9.2L8.6,8.2Z" fill="#ececec"/><circle cx="4.4" cy="8" r="1.3" fill="#ececec"/><circle cx="7" cy="11.4" r="1.3" fill="#ececec"/><circle cx="3.6" cy="12.8" r="1.1" fill="#ececec"/></svg>
<svg style="left:2.2px;top:136px" width="17.2" height="17.4" viewBox="0 0 17.2 17.4"><path d="M8.6,2.2L11,5H9.4V8H12.4V6.4L15.2,8.8L12.4,11.2V9.6H9.4V12.6H11L8.6,15.4L6.2,12.6H7.8V9.6H4.8V11.2L2,8.8L4.8,6.4V8H7.8V5H6.2Z" fill="#ececec"/></svg>
<svg style="left:2.2px;top:159px" width="17.2" height="17.4" viewBox="0 0 17.2 17.4"><rect x="4.4" y="4.6" width="8.4" height="8.4" fill="#d8d8d8"/></svg>
<svg style="left:2.2px;top:178.5px" width="17.2" height="17.4" viewBox="0 0 17.2 17.4"><path d="M4.2,7.4L9,3.2L13.4,8.6L7.6,13.4Z" fill="#ececec"/><path d="M5.6,6.2C5,4 6.4,2 8.4,2.4" fill="none" stroke="#ececec" stroke-width="1"/><path d="M13.6,10.2C14.6,11.8 15,12.8 14.4,13.6C13.8,14.3 12.8,14.1 12.6,13.2C12.4,12.4 13,11.4 13.6,10.2Z" fill="#ececec"/></svg>
<svg style="left:2.2px;top:198px" width="17.2" height="17.4" viewBox="0 0 17.2 17.4"><defs><linearGradient id="tg" x1="0" y1="0" x2="1" y2="1"><stop offset="0" stop-color="#6a6a6a"/><stop offset="1" stop-color="#e0e0e0"/></linearGradient></defs><rect x="3.2" y="3.6" width="10.8" height="10.4" fill="url(#tg)" stroke="#d0d0d0" stroke-width="0.9"/></svg>
<svg style="left:2.2px;top:220px" width="17.2" height="17.4" viewBox="0 0 17.2 17.4"><rect x="4" y="4.2" width="9.2" height="9.2" fill="none" stroke="#ececec" stroke-width="1.2" stroke-dasharray="2 1.4"/></svg>
<svg style="left:2.2px;top:239.5px" width="17.2" height="17.4" viewBox="0 0 17.2 17.4"><path d="M3.4,11.6C2.6,9.4 4.6,6.4 8,5C11.4,3.6 14.4,4.6 14.6,6.8C14.8,9 12.2,10.2 9.8,11C7.6,11.8 4.6,13.6 3.4,11.6Z" fill="none" stroke="#ececec" stroke-width="1.1" stroke-dasharray="1.8 1.3"/></svg>
<svg style="left:2.2px;top:259px" width="17.2" height="17.4" viewBox="0 0 17.2 17.4"><path d="M3.2,13.6L4.4,14.8L10.6,8.4L9.4,7.2Z" fill="#ececec"/><path d="M11.8,2.6V5M11.8,7.6V9.6M9,6.2H10.6M13,6.2H14.8M10,4.4L10.8,5.2M13.6,4.4L12.8,5.2M13.6,8L12.8,7.2" stroke="#ececec" stroke-width="0.9"/></svg>
<svg style="left:2.2px;top:278.3px" width="17.2" height="17.4" viewBox="0 0 17.2 17.4"><path d="M3.4,5H6M3.4,5V8M3.4,10V13.6H6M8,13.6H11M3.4,5" fill="none" stroke="#ececec" stroke-width="1" stroke-dasharray="1.6 1.2"/><path d="M13.2,2.8L14.6,4.2L8.4,10.6L6.6,11L7,9.2Z" fill="#ececec"/></svg>
<svg style="left:2.2px;top:297.6px" width="17.2" height="17.4" viewBox="0 0 17.2 17.4"><path d="M9.8,3L13.8,7L10,10.8L6,6.8Z" fill="none" stroke="#ececec" stroke-width="1.1"/><path d="M6,6.8L8,4.8L12,8.8L10,10.8Z" fill="#ececec"/><path d="M3.4,9V14H12" fill="none" stroke="#ececec" stroke-width="1" stroke-dasharray="1.6 1.2"/></svg>
<div class="t" style="left:5.2px;top:321px;font-family:'Liberation Serif',serif;font-size:16px;color:#f4f8ff;">T</div>
<svg style="left:2.2px;top:339.5px" width="17.2" height="17.4" viewBox="0 0 17.2 17.4"><path d="M3.6,5.2L6.4,3L10.2,4.2L10.6,7L8,9.2L4.2,8.4Z" fill="none" stroke="#ececec" stroke-width="1.1"/><path d="M8.6,7.4L14.2,10.6L11.6,11.2L12.8,13.8L11.6,14.4L10.4,11.8L8.6,13.4Z" fill="#ececec"/></svg>
<svg style="left:2.2px;top:359px" width="17.2" height="17.4" viewBox="0 0 17.2 17.4"><path d="M11.8,2.8L14.4,5.4L7.4,12.4L3.2,13.8L4.8,9.8Z" fill="#ececec"/><path d="M4.8,9.8L7.4,12.4" stroke="#404040" stroke-width="0.9"/></svg>
<svg style="left:2.2px;top:381px" width="17.2" height="17.4" viewBox="0 0 17.2 17.4"><path d="M12.4,2.6C13.4,1.8 14.8,3.2 14,4.2L12.4,5.8L13,6.4L12,7.4L9.6,5L10.6,4L11.2,4.6Z" fill="#ececec"/><path d="M9.8,6L11.2,7.4L6,12.6L3.6,13.6L4.6,11.2Z" fill="none" stroke="#ececec" stroke-width="1.1"/></svg>
<svg style="left:2.2px;top:400.5px" width="17.2" height="17.4" viewBox="0 0 17.2 17.4"><path d="M5.4,15C4.4,13.4 3.2,11.6 2.6,9.8C2.4,9 3.4,8.6 3.9,9.3L5.2,11V5C5.2,4 6.6,4 6.6,5V8.4V3.6C6.6,2.6 8,2.6 8,3.6V8.2V3.2C8,2.2 9.4,2.2 9.4,3.2V8.4V4.2C9.4,3.2 10.8,3.2 10.8,4.2V9L11.4,7.6C11.8,6.6 13.2,7 12.9,8.1C12.5,9.8 12.2,11 11.8,12.4C11.5,13.4 11.2,14.2 11,15Z" fill="#ececec"/></svg>
<div class="a" style="left:21px;top:48px;width:117.5px;height:152px;background:#2b2b2b;"></div>
<div class="a" style="left:21px;top:47.8px;width:117.5px;height:2.2px;background:#3c5266;"></div>
<div class="a" style="left:21px;top:50px;width:117.5px;height:11.3px;background:linear-gradient(#3d3a3a,#363434);"></div>
<div class="t" style="left:65.00px;top:51.92px;font-size:7.6px;color:#c4c4c4;transform:scaleX(0.9132);transform-origin:0 0;">Màu</div>
<svg style="left:121px;top:51.4px" width="7" height="7" viewBox="0 0 7 7"><path d="M4.2,1.6H1.2V5.8H5.4V3.4" fill="none" stroke="#c8c8c8" stroke-width="0.9"/><path d="M3.2,3.8L6,1M4.2,0.8H6.2V2.8" fill="none" stroke="#c8c8c8" stroke-width="0.9"/></svg>
<svg style="left:130.5px;top:52px" width="6" height="6" viewBox="0 0 6 6"><path d="M0.8,0.8L5,5M5,0.8L0.8,5" stroke="#e2e2e2" stroke-width="1.3"/></svg>
<div class="a" style="left:30.5px;top:70.8px;width:14.5px;height:14px;background:#000000;"></div>
<div class="a" style="left:25.3px;top:65px;width:14.6px;height:14.2px;background:#00ff0c;box-shadow:inset 0 0 0 1px #c81010;"></div>
<div class="a" style="left:27.8px;top:89px;width:15.2px;height:15px;background-color:#fff;background-image:linear-gradient(45deg,#d9d9d9 25%,transparent 25%,transparent 75%,#d9d9d9 75%),linear-gradient(45deg,#d9d9d9 25%,transparent 25%,transparent 75%,#d9d9d9 75%);background-size:7.6px 7.6px;background-position:0 0,3.8px 3.8px;"></div>
<div class="t" style="left:26.00px;top:109.14px;font-size:7.4px;color:#b8b8b8;transform:scaleX(0.9239);transform-origin:0 0;">R:0</div>
<div class="t" style="left:26.00px;top:116.94px;font-size:7.4px;color:#b8b8b8;transform:scaleX(0.8925);transform-origin:0 0;">G:255</div>
<div class="t" style="left:26.00px;top:124.54px;font-size:7.4px;color:#b8b8b8;transform:scaleX(0.8896);transform-origin:0 0;">B:12</div>
<div class="t" style="left:26.00px;top:136.31px;font-size:7.2px;color:#b8b8b8;transform:scaleX(0.8830);transform-origin:0 0;">#00FF0C</div>
<div class="a" style="left:27px;top:150.8px;width:14px;height:14.2px;background:#3d3d3d;border-radius:2px;"></div>
<div class="a" style="left:43.6px;top:150.8px;width:14.2px;height:14.2px;background:#3d3d3d;border-radius:2px;"></div>
<svg style="left:27px;top:150.8px" width="14" height="14.2" viewBox="0 0 14 14.2"><path d="M7,2.6C3.8,2.6 2.2,5 2.6,7.6C3,10.2 5.4,11.8 7.4,11.4C8.6,11.2 8,10 8.6,9.4C9.4,8.6 11.6,9.6 11.8,7.2C12,4.6 9.8,2.6 7,2.6Z" fill="#e8e8e8"/><circle cx="5" cy="5.6" r="0.9" fill="#3d3d3d"/><circle cx="7.4" cy="4.6" r="0.9" fill="#3d3d3d"/><circle cx="9.6" cy="5.8" r="0.9" fill="#3d3d3d"/><circle cx="4.8" cy="8.2" r="0.9" fill="#3d3d3d"/></svg>
<svg style="left:43.6px;top:150.8px" width="14.2" height="14.2" viewBox="0 0 14.2 14.2"><path d="M6.4,2.4C3.6,2.4 2,4.4 2.4,6.8C2.8,9 4.8,10.4 6.6,10C7.6,9.8 7.2,8.8 7.6,8.2C8.4,7.4 10.4,8.4 10.6,6.4C10.8,4.2 8.8,2.4 6.4,2.4Z" fill="#e8e8e8"/><circle cx="4.6" cy="5" r="0.8" fill="#3d3d3d"/><circle cx="6.8" cy="4.2" r="0.8" fill="#3d3d3d"/><circle cx="8.6" cy="5.2" r="0.8" fill="#3d3d3d"/><rect x="7.6" y="8.6" width="5" height="3.6" fill="#e8e8e8" stroke="#3d3d3d" stroke-width="0.6"/></svg>
<div class="a" style="left:62.4px;top:61.8px;width:58.8px;height:132.2px;overflow:hidden;background:linear-gradient(to bottom,rgba(0,0,0,0),#000),linear-gradient(to right,#fff,#00ff0c);"><div class="a" style="left:53.6px;top:-4.4px;width:6.4px;height:6.4px;border:1.4px solid #eaffea;border-radius:50%;"></div></div>
<div class="a" style="left:123.4px;top:61.8px;width:14.3px;height:132.8px;background:linear-gradient(to bottom,#ff0000 0%,#ff0080 8.3%,#ff00ff 16.7%,#8000ff 25%,#0000ff 33.3%,#0080ff 41.7%,#00ffff 50%,#00ff80 58.3%,#00ff00 66.7%,#80ff00 75%,#ffff00 83.3%,#ff8000 91.7%,#ff0000 100%);"></div>
<svg style="left:125.3px;top:144.8px" width="10.6" height="10.6" viewBox="0 0 10.6 10.6"><circle cx="5.3" cy="5.3" r="3.6" fill="none" stroke="#f4fff4" stroke-width="1.4"/></svg>
<div class="a" style="left:21px;top:200px;width:117.5px;height:98.5px;background:#2b2b2b;"></div>
<div class="a" style="left:21px;top:198.6px;width:117.5px;height:2.2px;background:#3c5266;"></div>
<div class="a" style="left:21px;top:200.8px;width:117.5px;height:10.8px;background:linear-gradient(#3d3a3a,#363434);"></div>
<div class="t" style="left:56.75px;top:202.47px;font-size:7.6px;color:#c4c4c4;transform:scaleX(0.8660);transform-origin:0 0;">Bảng màu</div>
<svg style="left:121px;top:202.2px" width="7" height="7" viewBox="0 0 7 7"><path d="M4.2,1.6H1.2V5.8H5.4V3.4" fill="none" stroke="#c8c8c8" stroke-width="0.9"/><path d="M3.2,3.8L6,1M4.2,0.8H6.2V2.8" fill="none" stroke="#c8c8c8" stroke-width="0.9"/></svg>
<svg style="left:130.5px;top:202.8px" width="6" height="6" viewBox="0 0 6 6"><path d="M0.8,0.8L5,5M5,0.8L0.8,5" stroke="#e2e2e2" stroke-width="1.3"/></svg>
<div class="a" style="left:22.8px;top:212px;width:103.6px;height:69.4px;background:#484848;"></div>
<div class="a" style="left:23px;top:212.8px;width:8px;height:8px;background:#03041c;"></div>
<div class="a" style="left:32.09px;top:212.8px;width:8px;height:8px;background:#000000;"></div>
<div class="a" style="left:41.18px;top:212.8px;width:8px;height:8px;background:#a56e6e;"></div>
<div class="a" style="left:50.27px;top:212.8px;width:8px;height:8px;background:#fbe6df;"></div>
<div class="a" style="left:59.36px;top:212.8px;width:8px;height:8px;background:#527458;"></div>
<div class="a" style="left:68.45px;top:212.8px;width:8px;height:8px;background:#fbe9e5;"></div>
<div class="a" style="left:77.54px;top:212.8px;width:8px;height:8px;background:#10e020;"></div>
<div class="a" style="left:86.63px;top:212.8px;width:8px;height:8px;background:#f9d5d1;"></div>
<div class="a" style="left:95.72px;top:212.8px;width:8px;height:8px;background:#f0dada;"></div>
<div class="a" style="left:104.81px;top:212.8px;width:8px;height:8px;background:#e8506a;"></div>
<div class="a" style="left:113.9px;top:212.8px;width:8px;height:8px;background:#6ee810;"></div>
<div class="a" style="left:23px;top:222px;width:8px;height:8px;background:#ffb6a2;"></div>
<div class="a" style="left:32.09px;top:222px;width:8px;height:8px;background:#ff8a90;"></div>
<div class="a" style="left:41.18px;top:222px;width:8px;height:8px;background:#3b5b41;"></div>
<div class="a" style="left:50.27px;top:222px;width:8px;height:8px;background:#2e4b37;"></div>
<div class="a" style="left:59.36px;top:222px;width:8px;height:8px;background:#e85b55;"></div>
<div class="a" style="left:68.45px;top:222px;width:8px;height:8px;background:#98aee0;"></div>
<div class="a" style="left:77.54px;top:222px;width:8px;height:8px;background:#1f3560;"></div>
<div class="a" style="left:86.63px;top:222px;width:8px;height:8px;background:#ea5d57;"></div>
<div class="a" style="left:127px;top:212px;width:10px;height:69.4px;background:#3a3a3a;"></div>
<div class="a" style="left:127px;top:212px;width:10px;height:5.4px;background:#2c2c2c;"></div>
<div class="a" style="left:127px;top:276px;width:10px;height:5.4px;background:#2c2c2c;"></div>
<div class="a" style="left:127.8px;top:218.4px;width:8.4px;height:56.6px;background:#6a6a6a;border-radius:2.5px;"></div>
<svg style="left:127px;top:212px" width="10" height="5" viewBox="0 0 10 5"><path d="M2.4,4.2L5,0.8L7.6,4.2Z" fill="#d0d0d0"/></svg>
<svg style="left:127px;top:276.4px" width="10" height="5" viewBox="0 0 10 5"><path d="M2.4,0.8L5,4.2L7.6,0.8Z" fill="#d0d0d0"/></svg>
<div class="a" style="left:24.4px;top:283.2px;width:14.4px;height:14.6px;background:#3d3d3d;border-radius:2px;box-shadow:inset 0 0 0 0.7px #515151;"></div>
<svg style="left:24.4px;top:283.2px" width="14.4" height="14.6" viewBox="0 0 14.4 14.6"><path d="M3.6,2.4H8.4L10.8,4.8V12.2H3.6Z" fill="#555" stroke="#e4e4e4" stroke-width="1"/><path d="M8.2,2.6V5H10.6" fill="none" stroke="#e4e4e4" stroke-width="0.8"/></svg>
<div class="a" style="left:40.8px;top:283.2px;width:14.4px;height:14.6px;background:#3d3d3d;border-radius:2px;box-shadow:inset 0 0 0 0.7px #515151;"></div>
<svg style="left:40.8px;top:283.2px" width="14.4" height="14.6" viewBox="0 0 14.4 14.6"><path d="M3,4.4H11.4M5.6,4.2V3H8.8V4.2M3.8,4.6V12H10.6V4.6" fill="none" stroke="#e4e4e4" stroke-width="1.1"/><path d="M5.8,6V10.6M7.2,6V10.6M8.6,6V10.6" stroke="#e4e4e4" stroke-width="0.8"/></svg>
<div class="a" style="left:58px;top:286.6px;width:0.8px;height:8px;background:#5a5a5a;"></div>
<div class="t" style="left:60.50px;top:287.47px;font-size:7px;color:#9a9a9a;transform:scaleX(1.2155);transform-origin:0 0;">---</div>
<div class="a" style="left:21px;top:300px;width:117.5px;height:133px;background:#2b2b2b;"></div>
<div class="a" style="left:21px;top:303.4px;width:117.5px;height:2.2px;background:#3c5266;"></div>
<div class="a" style="left:21px;top:305.6px;width:117.5px;height:10.8px;background:linear-gradient(#3d3a3a,#363434);"></div>
<div class="t" style="left:52.25px;top:307.27px;font-size:7.6px;color:#c4c4c4;transform:scaleX(0.9326);transform-origin:0 0;">Cọ: Airbrush</div>
<svg style="left:121px;top:307px" width="7" height="7" viewBox="0 0 7 7"><path d="M4.2,1.6H1.2V5.8H5.4V3.4" fill="none" stroke="#c8c8c8" stroke-width="0.9"/><path d="M3.2,3.8L6,1M4.2,0.8H6.2V2.8" fill="none" stroke="#c8c8c8" stroke-width="0.9"/></svg>
<svg style="left:130.5px;top:307.6px" width="6" height="6" viewBox="0 0 6 6"><path d="M0.8,0.8L5,5M5,0.8L0.8,5" stroke="#e2e2e2" stroke-width="1.3"/></svg>
<div class="a" style="left:22.8px;top:317.2px;width:103.6px;height:97.4px;background:#484848;"></div>
<div class="a" style="left:22.8px;top:317.2px;width:103.6px;height:97.4px;overflow:hidden;">
<div class="a" style="left:0;top:0.6px;width:103.6px;height:12.5px;background:#555555;"></div>
<div class="a" style="left:1.6px;top:2.4px;width:9px;height:9px;background:#2c2c2c;"></div>
<div class="t" style="left:14.4px;top:2.5px;font-size:9.2px;color:#d98c8c;-webkit-text-stroke:0.25px currentColor;transform:scaleX(0.91);transform-origin:0 0;">25</div>
<div class="t" style="left:35.4px;top:2.5px;font-size:9.2px;color:#e4e4e4;-webkit-text-stroke:0.25px currentColor;transform:scaleX(0.91);transform-origin:0 0;">Pen</div>
<div class="a" style="left:0;top:13.95px;width:103.6px;height:12.5px;background:#555555;"></div>
<div class="a" style="left:1.6px;top:15.75px;width:9px;height:9px;background:#2c2c2c;"></div>
<div class="t" style="left:14.4px;top:15.85px;font-size:9.2px;color:#e8e8e8;-webkit-text-stroke:0.25px currentColor;transform:scaleX(0.91);transform-origin:0 0;">10</div>
<div class="t" style="left:35.4px;top:15.85px;font-size:9.2px;color:#e4e4e4;-webkit-text-stroke:0.25px currentColor;transform:scaleX(0.91);transform-origin:0 0;">Pen (Sharp)</div>
<div class="a" style="left:0;top:27.3px;width:103.6px;height:12.5px;background:#555555;"></div>
<div class="a" style="left:1.6px;top:29.1px;width:9px;height:9px;background:#f03232;"></div>
<div class="t" style="left:14.4px;top:29.2px;font-size:9.2px;color:#e8e8e8;-webkit-text-stroke:0.25px currentColor;transform:scaleX(0.91);transform-origin:0 0;">15</div>
<div class="t" style="left:35.4px;top:29.2px;font-size:9.2px;color:#e4e4e4;-webkit-text-stroke:0.25px currentColor;transform:scaleX(0.91);transform-origin:0 0;">G Pen</div>
<div class="a" style="left:0;top:40.65px;width:103.6px;height:12.5px;background:#4c98da;"></div>
<div class="a" style="left:1.6px;top:42.45px;width:9px;height:9px;background:#d2d2da;"></div>
<div class="t" style="left:14.4px;top:42.55px;font-size:9.2px;color:#ffffff;font-weight:bold;transform:scaleX(0.96);transform-origin:0 0;">100</div>
<div class="t" style="left:35.4px;top:42.55px;font-size:9.2px;color:#ffffff;font-weight:bold;transform:scaleX(0.96);transform-origin:0 0;">Airbrush</div>
<div class="a" style="left:0;top:54px;width:103.6px;height:12.5px;background:#555555;"></div>
<div class="a" style="left:1.6px;top:55.8px;width:9px;height:9px;background:#2c2c2c;"></div>
<div class="t" style="left:14.4px;top:55.9px;font-size:9.2px;color:#d98c8c;-webkit-text-stroke:0.25px currentColor;transform:scaleX(0.91);transform-origin:0 0;">150</div>
<div class="t" style="left:35.4px;top:55.9px;font-size:9.2px;color:#e4e4e4;-webkit-text-stroke:0.25px currentColor;transform:scaleX(0.91);transform-origin:0 0;">Edge Pen</div>
<div class="a" style="left:0;top:67.35px;width:103.6px;height:12.5px;background:#555555;"></div>
<div class="a" style="left:1.6px;top:69.15px;width:9px;height:9px;background:#f03232;"></div>
<div class="t" style="left:14.4px;top:69.25px;font-size:9.2px;color:#e8e8e8;-webkit-text-stroke:0.25px currentColor;transform:scaleX(0.91);transform-origin:0 0;">15</div>
<div class="t" style="left:35.4px;top:69.25px;font-size:9.2px;color:#e4e4e4;-webkit-text-stroke:0.25px currentColor;transform:scaleX(0.91);transform-origin:0 0;">Mapping Pen</div>
<div class="a" style="left:0;top:80.7px;width:103.6px;height:12.5px;background:#555555;"></div>
<div class="a" style="left:1.6px;top:82.5px;width:9px;height:9px;background:#f2e21a;"></div>
<div class="t" style="left:14.4px;top:82.6px;font-size:9.2px;color:#e8e8e8;-webkit-text-stroke:0.25px currentColor;transform:scaleX(0.91);transform-origin:0 0;">19</div>
<div class="t" style="left:35.4px;top:82.6px;font-size:9.2px;color:#e4e4e4;-webkit-text-stroke:0.25px currentColor;transform:scaleX(0.91);transform-origin:0 0;">Sumi</div>
<div class="a" style="left:0;top:94.05px;width:103.6px;height:12.5px;background:#555555;"></div>
<div class="a" style="left:1.6px;top:95.85px;width:9px;height:9px;background:#f2e21a;"></div>
</div>
<svg style="left:115.6px;top:359.6px" width="9" height="9" viewBox="0 0 9 9"><g fill="#ffffff"><circle cx="4.5" cy="4.5" r="2.6"/><rect x="3.7" y="0.3" width="1.6" height="8.4" transform="rotate(0 4.5 4.5)"/><rect x="3.7" y="0.3" width="1.6" height="8.4" transform="rotate(45 4.5 4.5)"/><rect x="3.7" y="0.3" width="1.6" height="8.4" transform="rotate(90 4.5 4.5)"/><rect x="3.7" y="0.3" width="1.6" height="8.4" transform="rotate(135 4.5 4.5)"/></g><circle cx="4.5" cy="4.5" r="1.1" fill="#4c98da"/></svg>
<div class="a" style="left:127px;top:317.2px;width:10px;height:97.4px;background:#3a3a3a;"></div>
<div class="a" style="left:127px;top:317.2px;width:10px;height:5.4px;background:#2c2c2c;"></div>
<div class="a" style="left:127px;top:409.2px;width:10px;height:5.4px;background:#2c2c2c;"></div>
<div class="a" style="left:127.8px;top:324.6px;width:8.4px;height:32.2px;background:#6a6a6a;border-radius:2.5px;"></div>
<svg style="left:127px;top:317.2px" width="10" height="5" viewBox="0 0 10 5"><path d="M2.4,4.2L5,0.8L7.6,4.2Z" fill="#d0d0d0"/></svg>
<svg style="left:127px;top:409.6px" width="10" height="5" viewBox="0 0 10 5"><path d="M2.4,0.8L5,4.2L7.6,0.8Z" fill="#d0d0d0"/></svg>
<div class="a" style="left:24.8px;top:416.1px;width:14.2px;height:14.4px;background:#3d3d3d;border-radius:2px;box-shadow:inset 0 0 0 0.7px #515151;"></div>
<div class="a" style="left:41.4px;top:416.1px;width:13.2px;height:14.4px;background:#3d3d3d;border-radius:2px;box-shadow:inset 0 0 0 0.7px #515151;"></div>
<div class="a" style="left:57.4px;top:416.1px;width:18.2px;height:14.4px;background:#3d3d3d;border-radius:2px;box-shadow:inset 0 0 0 0.7px #515151;"></div>
<div class="a" style="left:78.2px;top:416.1px;width:13.4px;height:14.4px;background:#3d3d3d;border-radius:2px;box-shadow:inset 0 0 0 0.7px #515151;"></div>
<div class="a" style="left:94.4px;top:416.1px;width:14.2px;height:14.4px;background:#3d3d3d;border-radius:2px;box-shadow:inset 0 0 0 0.7px #515151;"></div>
<div class="a" style="left:111px;top:416.1px;width:14.4px;height:14.4px;background:#3d3d3d;border-radius:2px;box-shadow:inset 0 0 0 0.7px #515151;"></div>
<div class="a" style="left:129.4px;top:416.8px;width:5.6px;height:13px;background:#3a3a3a;"></div>
<div class="a" style="left:21px;top:431.8px;width:117.5px;height:4.4px;background:#212121;"></div>
<svg style="left:24.8px;top:416.1px" width="14.2" height="14.4" viewBox="0 0 14.2 14.4"><path d="M3.4,8.6h7.2a1.9,1.9 0 0 0 .2,-3.8a2.8,2.8 0 0 0 -5.4,-.6a2.2,2.2 0 0 0 -2,4.4z" fill="#e8e8e8"/><path d="M7,7.2V12.6M5.2,10.8L7,12.8L8.8,10.8" stroke="#e8e8e8" stroke-width="1.2" fill="none"/></svg>
<svg style="left:41.4px;top:416.1px" width="13.2" height="14.4" viewBox="0 0 13.2 14.4"><path d="M3.2,2.4H7.8L10.2,4.8V12.2H3.2Z" fill="#555" stroke="#e4e4e4" stroke-width="1"/><path d="M7.6,2.6V5H10" fill="none" stroke="#e4e4e4" stroke-width="0.8"/></svg>
<svg style="left:57.4px;top:416.1px" width="18.2" height="14.4" viewBox="0 0 18.2 14.4"><path d="M3,2.4H7.6L10,4.8V12.2H3Z" fill="#555" stroke="#e4e4e4" stroke-width="1"/><rect x="4.6" y="6.4" width="3.8" height="3.8" fill="#e4e4e4"/><path d="M12.4,7.4H16L14.2,9.6Z" fill="#e4e4e4"/></svg>
<svg style="left:78.2px;top:416.1px" width="13.4" height="14.4" viewBox="0 0 13.4 14.4"><path d="M3.2,2.4H7.8L10.2,4.8V12.2H3.2Z" fill="#555" stroke="#e4e4e4" stroke-width="1"/><path d="M8,6.6C7,5.6 5,6 5.2,7.4C5.4,8.6 8,8.2 8,9.6C8,11 6,11 5,10.2" fill="none" stroke="#e4e4e4" stroke-width="0.9"/></svg>
<svg style="left:94.4px;top:416.1px" width="14.2" height="14.4" viewBox="0 0 14.2 14.4"><path d="M2.6,4H6L7,5.2H11.6V11.6H2.6Z" fill="#e4e4e4"/></svg>
<svg style="left:111px;top:416.1px" width="14.4" height="14.4" viewBox="0 0 14.4 14.4"><rect x="5.4" y="3" width="6.2" height="6.2" fill="none" stroke="#e4e4e4" stroke-width="1"/><rect x="3" y="5.4" width="6.2" height="6.2" fill="#3d3d3d" stroke="#e4e4e4" stroke-width="1"/></svg>
<div class="a" style="left:21px;top:433px;width:117.5px;height:103px;background:#2b2b2b;"></div>
<div class="a" style="left:21px;top:436.2px;width:117.5px;height:2.2px;background:#3c5266;"></div>
<div class="a" style="left:21px;top:438.4px;width:117.5px;height:10.8px;background:linear-gradient(#3d3a3a,#363434);"></div>
<div class="t" style="left:51.25px;top:440.07px;font-size:7.6px;color:#c4c4c4;transform:scaleX(0.8838);transform-origin:0 0;">Xem trước cọ</div>
<svg style="left:121px;top:439.8px" width="7" height="7" viewBox="0 0 7 7"><path d="M4.2,1.6H1.2V5.8H5.4V3.4" fill="none" stroke="#c8c8c8" stroke-width="0.9"/><path d="M3.2,3.8L6,1M4.2,0.8H6.2V2.8" fill="none" stroke="#c8c8c8" stroke-width="0.9"/></svg>
<svg style="left:130.5px;top:440.4px" width="6" height="6" viewBox="0 0 6 6"><path d="M0.8,0.8L5,5M5,0.8L0.8,5" stroke="#e2e2e2" stroke-width="1.3"/></svg>
<div class="a" style="left:21px;top:449.3px;width:45.8px;height:86.4px;background:#393939;overflow:hidden;"><div class="a" style="left:-20px;top:-0.3px;width:86px;height:86px;border-radius:50%;background:#000;"></div></div>
<div class="t" style="left:30.40px;top:452.11px;font-size:7.2px;color:#3f86c8;transform:scaleX(0.9459);transform-origin:0 0;">7.26mm</div>
<div class="a" style="left:67px;top:449.3px;width:70.8px;height:86.4px;background-color:#fff;background-image:linear-gradient(45deg,#e2e2e2 25%,transparent 25%,transparent 75%,#e2e2e2 75%),linear-gradient(45deg,#e2e2e2 25%,transparent 25%,transparent 75%,#e2e2e2 75%);background-size:5px 5px;background-position:0 0,2.5px 2.5px;overflow:hidden;"><div class="a" style="left:-5px;top:21.5px;width:86px;height:36px;border-radius:50%;background:radial-gradient(closest-side,rgba(55,55,55,0.72),rgba(70,70,70,0.6) 30%,rgba(95,95,95,0.3) 62%,rgba(120,120,120,0.08) 85%,rgba(120,120,120,0) 100%);transform:rotate(21deg);filter:blur(1.4px);"><div class="a" style="left:44px;top:8px;width:30px;height:20px;border-radius:50%;background:radial-gradient(closest-side,rgba(50,50,50,0.35),rgba(60,60,60,0));"></div></div></div>
<div class="a" style="left:138.5px;top:48px;width:2.5px;height:488px;background:#1d2126;"></div>
<div class="a" style="left:141px;top:48px;width:711px;height:14px;background:#262626;"></div>
<div class="a" style="left:141px;top:47.6px;width:711px;height:0.8px;background:#1c1c1c;"></div>
<div class="a" style="left:318px;top:50px;width:1px;height:12px;background:#3a3a3a;"></div>
<div class="a" style="left:494.6px;top:48.2px;width:177.6px;height:13.8px;background:linear-gradient(#4d4d4d,#363636);"></div>
<div class="a" style="left:672.2px;top:50px;width:1px;height:12px;background:#1a1a1a;"></div>
<div class="t" style="left:218.05px;top:52.51px;font-size:7.2px;color:#a8a8a8;transform:scaleX(0.9627);transform-origin:0 0;">Untitled</div>
<div class="t" style="left:394.65px;top:52.51px;font-size:7.2px;color:#a8a8a8;transform:scaleX(0.9627);transform-origin:0 0;">Untitled</div>
<div class="t" style="left:571.25px;top:52.51px;font-size:7.2px;color:#d0d0d0;transform:scaleX(0.9627);transform-origin:0 0;">Untitled</div>
<div class="a" style="left:838px;top:62px;width:12.6px;height:463.2px;background:#232323;"></div>
<div class="a" style="left:838.4px;top:62px;width:10px;height:463px;background:linear-gradient(to right,#343434,#3e3e3e 50%,#343434);"></div>
<div class="a" style="left:838.4px;top:62px;width:10px;height:6px;background:#262626;"></div>
<div class="a" style="left:838.4px;top:518.6px;width:10px;height:6.6px;background:#262626;"></div>
<div class="a" style="left:839px;top:234px;width:9px;height:78px;background:linear-gradient(to right,#747474,#646464);border-radius:2.5px;"></div>
<svg style="left:837.4px;top:62px" width="12" height="6" viewBox="0 0 12 6"><path d="M3.2,4.8L6,1.2L8.8,4.8Z" fill="#d0d0d0"/></svg>
<svg style="left:837.4px;top:519px" width="12" height="6" viewBox="0 0 12 6"><path d="M3.2,1.2L6,4.8L8.8,1.2Z" fill="#d0d0d0"/></svg>
<div class="a" style="left:141px;top:525.2px;width:710px;height:11px;background:#232323;"></div>
<div class="a" style="left:141px;top:525.6px;width:707.4px;height:9.4px;background:linear-gradient(#2a2a2a,#333333 50%,#2a2a2a);"></div>
<div class="a" style="left:415px;top:526.4px;width:126px;height:8px;background:linear-gradient(#747474,#646464);border-radius:2.5px;"></div>
<svg style="left:141px;top:525px" width="6" height="11" viewBox="0 0 6 11"><path d="M4.6,2.6L1.4,5.5L4.6,8.4Z" fill="#d0d0d0"/></svg>
<svg style="left:841.5px;top:525px" width="6" height="11" viewBox="0 0 6 11"><path d="M1.4,2.6L4.6,5.5L1.4,8.4Z" fill="#d0d0d0"/></svg>
<div class="a" style="left:850.4px;top:48px;width:1.6px;height:488px;background:#1d2126;"></div>
<div class="a" style="left:0px;top:536px;width:1024px;height:12px;background:#212121;"></div>
<div class="a" style="left:852px;top:48px;width:172px;height:106px;background:#2b2b2b;"></div>
<div class="a" style="left:852px;top:47.8px;width:172px;height:2.2px;background:#3c5266;"></div>
<div class="a" style="left:852px;top:50px;width:172px;height:11.4px;background:linear-gradient(#3d3a3a,#363434);"></div>
<div class="t" style="left:916.85px;top:51.97px;font-size:7.6px;color:#c4c4c4;transform:scaleX(0.9009);transform-origin:0 0;">Hoa tiêu</div>
<svg style="left:1006.4px;top:51.4px" width="7" height="7" viewBox="0 0 7 7"><path d="M4.2,1.6H1.2V5.8H5.4V3.4" fill="none" stroke="#c8c8c8" stroke-width="0.9"/><path d="M3.2,3.8L6,1M4.2,0.8H6.2V2.8" fill="none" stroke="#c8c8c8" stroke-width="0.9"/></svg>
<svg style="left:1016.4px;top:52px" width="6" height="6" viewBox="0 0 6 6"><path d="M0.8,0.8L5,5M5,0.8L0.8,5" stroke="#e2e2e2" stroke-width="1.3"/></svg>
<div class="a" style="left:852px;top:61.4px;width:172px;height:17.8px;background:#2a2a2a;"></div>
<div class="a" style="left:854.2px;top:63.2px;width:14.4px;height:14.2px;background:#3d3d3d;border-radius:2px;box-shadow:inset 0 0 0 0.7px #515151;"></div>
<div class="a" style="left:874.2px;top:63.2px;width:14.4px;height:14.2px;background:#3d3d3d;border-radius:2px;box-shadow:inset 0 0 0 0.7px #515151;"></div>
<div class="a" style="left:890.6px;top:63.2px;width:14.4px;height:14.2px;background:#3d3d3d;border-radius:2px;box-shadow:inset 0 0 0 0.7px #515151;"></div>
<div class="a" style="left:907px;top:63.2px;width:14.4px;height:14.2px;background:#3d3d3d;border-radius:2px;box-shadow:inset 0 0 0 0.7px #515151;"></div>
<div class="a" style="left:927.5px;top:63.2px;width:14.4px;height:14.2px;background:#3d3d3d;border-radius:2px;box-shadow:inset 0 0 0 0.7px #515151;"></div>
<div class="a" style="left:944px;top:63.2px;width:14.4px;height:14.2px;background:#0c0c0c;border-radius:2px;box-shadow:inset 0 0 0 0.7px #2a2a2a;"></div>
<div class="a" style="left:960.4px;top:63.2px;width:14.4px;height:14.2px;background:#3d3d3d;border-radius:2px;box-shadow:inset 0 0 0 0.7px #515151;"></div>
<div class="a" style="left:981px;top:63.2px;width:14.4px;height:14.2px;background:#3d3d3d;border-radius:2px;box-shadow:inset 0 0 0 0.7px #515151;"></div>
<div class="a" style="left:871.2px;top:65.4px;width:0.8px;height:10px;background:#4a4a4a;"></div>
<div class="a" style="left:924.6px;top:65.4px;width:0.8px;height:10px;background:#4a4a4a;"></div>
<div class="a" style="left:978px;top:65.4px;width:0.8px;height:10px;background:#4a4a4a;"></div>
<svg style="left:854.2px;top:63.2px" width="14.4" height="14.2" viewBox="0 0 14.4 14.2"><circle cx="6" cy="6" r="3.5" fill="none" stroke="#e4e4e4" stroke-width="1.25"/><path d="M8.6,8.7L11.2,11.4" stroke="#e4e4e4" stroke-width="1.7" stroke-linecap="round"/><path d="M5.2,5L6.2,4.2V7.8" fill="none" stroke="#e4e4e4" stroke-width="1.1"/></svg>
<svg style="left:874.2px;top:63.2px" width="14.4" height="14.2" viewBox="0 0 14.4 14.2"><circle cx="6" cy="6" r="3.5" fill="none" stroke="#e4e4e4" stroke-width="1.25"/><path d="M8.6,8.7L11.2,11.4" stroke="#e4e4e4" stroke-width="1.7" stroke-linecap="round"/><path d="M4,6H8M6,4V8" stroke="#e4e4e4" stroke-width="1.3"/></svg>
<svg style="left:890.6px;top:63.2px" width="14.4" height="14.2" viewBox="0 0 14.4 14.2"><rect x="2.2" y="2.8" width="10" height="8.6" fill="#9c9c9c" stroke="#c8c8c8" stroke-width="0.7"/><path d="M7.2,3.6L8.6,5.2H7.8V6.5H9.4V5.7L11,7.1L9.4,8.5V7.7H7.8V9H8.6L7.2,10.6L5.8,9H6.6V7.7H5V8.5L3.4,7.1L5,5.7V6.5H6.6V5.2H5.8Z" fill="#2c2c2c"/></svg>
<svg style="left:907px;top:63.2px" width="14.4" height="14.2" viewBox="0 0 14.4 14.2"><circle cx="6" cy="6" r="3.5" fill="none" stroke="#e4e4e4" stroke-width="1.25"/><path d="M8.6,8.7L11.2,11.4" stroke="#e4e4e4" stroke-width="1.7" stroke-linecap="round"/><path d="M4,6H8" stroke="#e4e4e4" stroke-width="1.3"/></svg>
<svg style="left:927.5px;top:63.2px" width="14.4" height="14.2" viewBox="0 0 14.4 14.2"><path d="M3,7.2A4.3,4.3 0 1 0 5,3.4" fill="none" stroke="#e4e4e4" stroke-width="1.1"/><path d="M3.2,2L5.6,3.2L3.8,5Z" fill="#e4e4e4"/><rect x="5.2" y="5.4" width="4.2" height="3.6" fill="#e4e4e4" transform="rotate(-20 7.2 7.2)"/></svg>
<svg style="left:944px;top:63.2px" width="14.4" height="14.2" viewBox="0 0 14.4 14.2"><rect x="4" y="4" width="6.4" height="6.2" fill="#e4e4e4"/><path d="M2.4,4.4V2.6H4.4M10,2.6H12V4.4M12,9.8V11.6H10M4.4,11.6H2.4V9.8" fill="none" stroke="#e4e4e4" stroke-width="1"/></svg>
<svg style="left:960.4px;top:63.2px" width="14.4" height="14.2" viewBox="0 0 14.4 14.2"><g transform="translate(14.4 0) scale(-1 1)"><path d="M3,7.2A4.3,4.3 0 1 0 5,3.4" fill="none" stroke="#e4e4e4" stroke-width="1.1"/><path d="M3.2,2L5.6,3.2L3.8,5Z" fill="#e4e4e4"/><rect x="5.2" y="5.4" width="4.2" height="3.6" fill="#e4e4e4" transform="rotate(-20 7.2 7.2)"/></g></svg>
<svg style="left:981px;top:63.2px" width="14.4" height="14.2" viewBox="0 0 14.4 14.2"><rect x="2.4" y="6" width="4" height="5.8" fill="#e4e4e4"/><rect x="8.4" y="6" width="4" height="5.8" fill="none" stroke="#e4e4e4" stroke-width="0.9"/><path d="M4,4.6C5,2.4 9.6,2.4 10.6,4.6" fill="none" stroke="#e4e4e4" stroke-width="0.9"/><path d="M9.6,4.8H11.4V3" fill="none" stroke="#e4e4e4" stroke-width="0.8"/></svg>
<div class="a" style="left:852px;top:79.2px;width:172px;height:74.4px;background:#484848;"></div>
<div class="a" style="left:888.3px;top:79.4px;width:99px;height:74px;background:#ffffff;"></div>
<svg style="left:888.3px;top:79.4px" width="99" height="74" viewBox="0 0 99 74"><circle cx="41.6" cy="28.6" r="17" fill="#fdffd8" opacity="0.8"/><path d="M29.6,35.6C28.6,27 33,19.6 41.8,19.2C50.4,19 56.6,25.6 57.4,33.8C57.6,36.6 56.4,38.8 54,39.2L54.4,41.4C47,41.6 38,41 32.4,39.6L32.6,38.2C30.6,37.6 29.8,36.8 29.6,35.6Z" fill="#fff" stroke="#3a3a3a" stroke-width="0.9"/><circle cx="35.4" cy="32.4" r="4.2" fill="#ee918c" opacity="0.85"/><circle cx="51.6" cy="34.2" r="4.4" fill="#ee918c" opacity="0.85"/><circle cx="38.8" cy="30" r="2" fill="#222"/><circle cx="49.4" cy="31.4" r="2" fill="#222"/><rect x="24.6" y="17" width="39.6" height="26" fill="none" stroke="#e01c24" stroke-width="1.1"/></svg>
<div class="a" style="left:852px;top:154px;width:172px;height:187.5px;background:#2b2b2b;"></div>
<div class="a" style="left:852px;top:156.2px;width:172px;height:2.2px;background:#3c5266;"></div>
<div class="a" style="left:852px;top:158.4px;width:172px;height:10.8px;background:linear-gradient(#3d3a3a,#363434);"></div>
<div class="t" style="left:922.95px;top:160.07px;font-size:7.6px;color:#c4c4c4;transform:scaleX(0.9303);transform-origin:0 0;">Lớp</div>
<svg style="left:1006.4px;top:159.8px" width="7" height="7" viewBox="0 0 7 7"><path d="M4.2,1.6H1.2V5.8H5.4V3.4" fill="none" stroke="#c8c8c8" stroke-width="0.9"/><path d="M3.2,3.8L6,1M4.2,0.8H6.2V2.8" fill="none" stroke="#c8c8c8" stroke-width="0.9"/></svg>
<svg style="left:1016.4px;top:160.4px" width="6" height="6" viewBox="0 0 6 6"><path d="M0.8,0.8L5,5M5,0.8L0.8,5" stroke="#e2e2e2" stroke-width="1.3"/></svg>
<div class="t" style="left:854.80px;top:174.77px;font-size:7.6px;color:#c8c8c8;transform:scaleX(0.9263);transform-origin:0 0;">Độ trong</div>
<div class="a" style="left:898.6px;top:172.8px;width:98.6px;height:10px;background:linear-gradient(to right,#6cb8f2,#4791d6);"></div>
<div class="t" style="left:1001.20px;top:174.37px;font-size:7.6px;color:#c8c8c8;transform:scaleX(0.8817);transform-origin:0 0;">100 %</div>
<div class="t" style="left:854.80px;top:189.97px;font-size:7.6px;color:#c8c8c8;transform:scaleX(0.9050);transform-origin:0 0;">Pha trộn</div>
<div class="a" style="left:899px;top:187.2px;width:121px;height:11.6px;background:linear-gradient(#4c4a4a,#434141);border-radius:1.5px;"></div>
<div class="t" style="left:901.60px;top:189.97px;font-size:7.6px;color:#bdbdbd;transform:scaleX(0.8496);transform-origin:0 0;">Bình thường</div>
<svg style="left:1013px;top:191.6px" width="6" height="4" viewBox="0 0 6 4"><path d="M0.8,0.8L3,3.2L5.2,0.8Z" fill="#b8b8b8"/></svg>
<div class="a" style="left:856px;top:206.3px;width:6.2px;height:6.2px;background:transparent;box-shadow:inset 0 0 0 0.9px #4c4c4c;"></div>
<div class="t" style="left:866.00px;top:205.74px;font-size:7.4px;color:#5e5e5e;transform:scaleX(0.8844);transform-origin:0 0;">Bảo vệ alpha</div>
<div class="a" style="left:913.2px;top:206.3px;width:6.2px;height:6.2px;background:#2a2a2a;box-shadow:inset 0 0 0 1px #bdbdbd;"></div>
<div class="t" style="left:922.80px;top:205.74px;font-size:7.4px;color:#c8c8c8;transform:scaleX(0.8661);transform-origin:0 0;">Xén bớt</div>
<div class="a" style="left:969.6px;top:206.3px;width:6.2px;height:6.2px;background:#2a2a2a;box-shadow:inset 0 0 0 1px #bdbdbd;"></div>
<div class="t" style="left:979.30px;top:205.74px;font-size:7.4px;color:#c8c8c8;transform:scaleX(0.8395);transform-origin:0 0;">Khóa</div>
<div class="a" style="left:853px;top:217.4px;width:159px;height:101px;background:#484848;"></div>
<div class="a" style="left:853px;top:217.6px;width:159px;height:25.8px;background:#585858;"></div>
<div class="a" style="left:866px;top:217.6px;width:146px;height:25.8px;background:#4c98da;"></div>
<div class="a" style="left:853px;top:243.4px;width:159px;height:0.7px;background:#3c3c3c;"></div>
<div class="a" style="left:856.2px;top:227.6px;width:6.2px;height:6.2px;border-radius:50%;background:#dcdcdc;"></div>
<div class="a" style="left:853px;top:244px;width:159px;height:25.8px;background:#585858;"></div>
<div class="a" style="left:853px;top:269.8px;width:159px;height:0.7px;background:#3c3c3c;"></div>
<div class="a" style="left:856.2px;top:254px;width:6.2px;height:6.2px;border-radius:50%;background:#dcdcdc;"></div>
<div class="a" style="left:853px;top:270.4px;width:159px;height:25.8px;background:#585858;"></div>
<div class="a" style="left:853px;top:296.2px;width:159px;height:0.7px;background:#3c3c3c;"></div>
<div class="a" style="left:856.2px;top:280.4px;width:6.2px;height:6.2px;border-radius:50%;background:#dcdcdc;"></div>
<div class="a" style="left:875.8px;top:222.4px;width:23.4px;height:17px;background:#4c98da;"></div>
<div class="a" style="left:875.6px;top:229.8px;width:23.4px;height:1.7px;background:#e9eef5;"></div>
<div class="a" style="left:878px;top:230.3px;width:18px;height:0.7px;background:#8d9bb0;"></div>
<div class="a" style="left:875.8px;top:248.8px;width:23.4px;height:17.2px;background-color:#fff;background-image:linear-gradient(45deg,#dcdcdc 25%,transparent 25%,transparent 75%,#dcdcdc 75%),linear-gradient(45deg,#dcdcdc 25%,transparent 25%,transparent 75%,#dcdcdc 75%);background-size:4px 4px;background-position:0 0,2px 2px;"></div>
<svg style="left:875.8px;top:248.8px" width="23.4" height="17.2" viewBox="0 0 23.4 17.2"><circle cx="11.6" cy="7.8" r="5" fill="#f3f86e" opacity="0.9"/><circle cx="11.6" cy="7.8" r="3" fill="#fbfdc8"/></svg>
<div class="a" style="left:875.8px;top:275.2px;width:23.4px;height:17.2px;background-color:#fff;background-image:linear-gradient(45deg,#dcdcdc 25%,transparent 25%,transparent 75%,#dcdcdc 75%),linear-gradient(45deg,#dcdcdc 25%,transparent 25%,transparent 75%,#dcdcdc 75%);background-size:4px 4px;background-position:0 0,2px 2px;"></div>
<svg style="left:875.8px;top:275.2px" width="23.4" height="17.2" viewBox="0 0 23.4 17.2"><circle cx="9.4" cy="8.2" r="1.5" fill="#e88" /><circle cx="13.8" cy="8.6" r="1.5" fill="#e88"/><circle cx="10.4" cy="7.6" r="0.8" fill="#333"/><circle cx="13" cy="7.9" r="0.8" fill="#333"/></svg>
<div class="a" style="left:909.6px;top:223.6px;width:89.6px;height:14px;overflow:hidden;"><div class="t" style="left:0;top:2.4px;font-weight:bold;font-size:9.6px;color:#fff;transform:scaleX(0.9451);transform-origin:0 0;">nguyenthihuonggiang94512</div></div>
<div class="t" style="left:909.80px;top:253.15px;font-size:8.8px;color:#ececec;transform:scaleX(0.9289);transform-origin:0 0;">Lớp2</div>
<div class="t" style="left:909.80px;top:279.55px;font-size:8.8px;color:#ececec;transform:scaleX(0.9289);transform-origin:0 0;">Lớp1</div>
<svg style="left:1000px;top:225px" width="11" height="11" viewBox="0 0 11 11"><g fill="#ffffff"><circle cx="5.5" cy="5.5" r="3.2"/><rect x="4.5" y="0.3" width="2" height="10.4" transform="rotate(0 5.5 5.5)"/><rect x="4.5" y="0.3" width="2" height="10.4" transform="rotate(45 5.5 5.5)"/><rect x="4.5" y="0.3" width="2" height="10.4" transform="rotate(90 5.5 5.5)"/><rect x="4.5" y="0.3" width="2" height="10.4" transform="rotate(135 5.5 5.5)"/></g><circle cx="5.5" cy="5.5" r="1.4" fill="#4c98da"/></svg>
<div class="a" style="left:1013px;top:217.4px;width:10px;height:101px;background:#3a3a3a;"></div>
<div class="a" style="left:1013px;top:217.4px;width:10px;height:5.4px;background:#2c2c2c;"></div>
<div class="a" style="left:1013px;top:313px;width:10px;height:5.4px;background:#2c2c2c;"></div>
<div class="a" style="left:1013.8px;top:224.6px;width:8.4px;height:88px;background:#6a6a6a;border-radius:2.5px;"></div>
<svg style="left:1013px;top:217.4px" width="10" height="5" viewBox="0 0 10 5"><path d="M2.4,4.2L5,0.8L7.6,4.2Z" fill="#d0d0d0"/></svg>
<svg style="left:1013px;top:313.4px" width="10" height="5" viewBox="0 0 10 5"><path d="M2.4,0.8L5,4.2L7.6,0.8Z" fill="#d0d0d0"/></svg>
<div class="a" style="left:855.2px;top:321px;width:14.2px;height:14.4px;background:#3d3d3d;border-radius:2px;box-shadow:inset 0 0 0 0.7px #515151;"></div>
<div class="a" style="left:871.4px;top:321px;width:14.4px;height:14.4px;background:#3d3d3d;border-radius:2px;box-shadow:inset 0 0 0 0.7px #515151;"></div>
<div class="a" style="left:888px;top:321px;width:14.2px;height:14.4px;background:#3d3d3d;border-radius:2px;box-shadow:inset 0 0 0 0.7px #515151;"></div>
<div class="a" style="left:904px;top:321px;width:18.8px;height:14.4px;background:#3d3d3d;border-radius:2px;box-shadow:inset 0 0 0 0.7px #515151;"></div>
<div class="a" style="left:924.8px;top:321px;width:14.2px;height:14.4px;background:#3d3d3d;border-radius:2px;box-shadow:inset 0 0 0 0.7px #515151;"></div>
<div class="a" style="left:945px;top:321px;width:14.4px;height:14.4px;background:#3d3d3d;border-radius:2px;box-shadow:inset 0 0 0 0.7px #515151;"></div>
<div class="a" style="left:961.5px;top:321px;width:14.4px;height:14.4px;background:#101010;border-radius:2px;box-shadow:inset 0 0 0 0.7px #3a3a3a;"></div>
<div class="a" style="left:982px;top:321px;width:14.2px;height:14.4px;background:#3d3d3d;border-radius:2px;box-shadow:inset 0 0 0 0.7px #515151;"></div>
<div class="a" style="left:941.6px;top:323.2px;width:0.8px;height:10px;background:#4a4a4a;"></div>
<div class="a" style="left:978.6px;top:323.2px;width:0.8px;height:10px;background:#4a4a4a;"></div>
<svg style="left:855.2px;top:321px" width="14.2" height="14.4" viewBox="0 0 14.2 14.4"><path d="M3.4,2.4H8L10.4,4.8V12.2H3.4Z" fill="#555" stroke="#e4e4e4" stroke-width="1"/><path d="M7.8,2.6V5H10.2" fill="none" stroke="#e4e4e4" stroke-width="0.8"/></svg>
<svg style="left:871.4px;top:321px" width="14.4" height="14.4" viewBox="0 0 14.4 14.4"><path d="M3.4,2.4H8L10.4,4.8V12.2H3.4Z" fill="#555" stroke="#e4e4e4" stroke-width="1"/><path d="M7.8,2.6V5H10.2" fill="none" stroke="#e4e4e4" stroke-width="0.8"/><circle cx="6.9" cy="7" r="1.15" fill="none" stroke="#f0f0f0" stroke-width="0.8"/><circle cx="6.9" cy="9.5" r="1.3" fill="none" stroke="#f0f0f0" stroke-width="0.8"/></svg>
<svg style="left:888px;top:321px" width="14.2" height="14.4" viewBox="0 0 14.2 14.4"><path d="M3.4,2.4H8L10.4,4.8V12.2H3.4Z" fill="#555" stroke="#e4e4e4" stroke-width="1"/><path d="M7.8,2.6V5H10.2" fill="none" stroke="#e4e4e4" stroke-width="0.8"/><path d="M5.9,7.2L7.1,6.2V10.8" fill="none" stroke="#f0f0f0" stroke-width="1"/></svg>
<svg style="left:904px;top:321px" width="18.8" height="14.4" viewBox="0 0 18.8 14.4"><path d="M3,2.2H6.8L9,4.4V9.6H3Z" fill="none" stroke="#e4e4e4" stroke-width="0.9"/><path d="M6.2,10.4H10.6M8.4,8.2V12.6" stroke="#e4e4e4" stroke-width="1.2"/><path d="M12.6,7.4H16.4L14.5,9.6Z" fill="#e4e4e4"/></svg>
<svg style="left:924.8px;top:321px" width="14.2" height="14.4" viewBox="0 0 14.2 14.4"><path d="M2.6,4H6L7,5.2H11.6V11.4H2.6Z" fill="#e4e4e4"/></svg>
<svg style="left:945px;top:321px" width="14.4" height="14.4" viewBox="0 0 14.4 14.4"><rect x="5.4" y="3.2" width="6" height="6" fill="none" stroke="#e4e4e4" stroke-width="1"/><rect x="3" y="5.6" width="6" height="6" fill="#3d3d3d" stroke="#e4e4e4" stroke-width="1"/></svg>
<svg style="left:961.5px;top:321px" width="14.4" height="14.4" viewBox="0 0 14.4 14.4"><path d="M3,3H6.4V11.6H3Z" fill="none" stroke="#f0f0f0" stroke-width="0.9" stroke-dasharray="1.4 0.9"/><rect x="8" y="5.6" width="4" height="3.4" fill="#f0f0f0"/><path d="M6.6,7.3H8" stroke="#f0f0f0" stroke-width="1"/></svg>
<svg style="left:982px;top:321px" width="14.2" height="14.4" viewBox="0 0 14.2 14.4"><path d="M3,4.4H11.4M5.6,4.2V3H8.8V4.2M3.8,4.6V12H10.6V4.6" fill="none" stroke="#e4e4e4" stroke-width="1.1"/><path d="M5.8,6V10.6M7.2,6V10.6M8.6,6V10.6" stroke="#e4e4e4" stroke-width="0.8"/></svg>
<div class="a" style="left:852px;top:341.5px;width:172px;height:194.5px;background:#2b2b2b;"></div>
<div class="a" style="left:852px;top:336.4px;width:172px;height:4.4px;background:#202020;"></div>
<div class="a" style="left:852px;top:340.7px;width:172px;height:2.2px;background:#3c5266;"></div>
<div class="a" style="left:852px;top:342.9px;width:172px;height:10.8px;background:linear-gradient(#3d3a3a,#363434);"></div>
<div class="t" style="left:913.15px;top:344.57px;font-size:7.6px;color:#c4c4c4;transform:scaleX(0.8844);transform-origin:0 0;">Brush Size</div>
<svg style="left:1006.4px;top:344.3px" width="7" height="7" viewBox="0 0 7 7"><path d="M4.2,1.6H1.2V5.8H5.4V3.4" fill="none" stroke="#c8c8c8" stroke-width="0.9"/><path d="M3.2,3.8L6,1M4.2,0.8H6.2V2.8" fill="none" stroke="#c8c8c8" stroke-width="0.9"/></svg>
<svg style="left:1016.4px;top:344.9px" width="6" height="6" viewBox="0 0 6 6"><path d="M0.8,0.8L5,5M5,0.8L0.8,5" stroke="#e2e2e2" stroke-width="1.3"/></svg>
<div class="a" style="left:852px;top:354px;width:160px;height:181.4px;background:#484848;"></div>
<div class="a" style="left:852.5px;top:354.5px;width:25.7px;height:32.2px;background:#575757;"></div>
<div class="t" style="left:863.80px;top:379.81px;font-size:6.6px;color:#cfcfcf;transform:scaleX(0.8200);transform-origin:0 0;">1</div>
<div class="a" style="left:879.13px;top:354.5px;width:25.7px;height:32.2px;background:#575757;"></div>
<svg style="left:878.63px;top:354px" width="26.6" height="33" viewBox="0 0 26.6 33"><circle cx="13.3" cy="13.9" r="0.35" fill="#8e8e8e"/></svg>
<div class="t" style="left:888.17px;top:379.81px;font-size:6.6px;color:#cfcfcf;transform:scaleX(0.8200);transform-origin:0 0;">1.5</div>
<div class="a" style="left:905.76px;top:354.5px;width:25.7px;height:32.2px;background:#575757;"></div>
<svg style="left:905.26px;top:354px" width="26.6" height="33" viewBox="0 0 26.6 33"><circle cx="13.3" cy="13.9" r="0.45" fill="#8e8e8e"/></svg>
<div class="t" style="left:917.06px;top:379.81px;font-size:6.6px;color:#cfcfcf;transform:scaleX(0.8200);transform-origin:0 0;">2</div>
<div class="a" style="left:932.39px;top:354.5px;width:25.7px;height:32.2px;background:#575757;"></div>
<svg style="left:931.89px;top:354px" width="26.6" height="33" viewBox="0 0 26.6 33"><circle cx="13.3" cy="13.9" r="0.8" fill="#d8d8d8"/></svg>
<div class="t" style="left:943.69px;top:379.81px;font-size:6.6px;color:#cfcfcf;transform:scaleX(0.8200);transform-origin:0 0;">3</div>
<div class="a" style="left:959.02px;top:354.5px;width:25.7px;height:32.2px;background:#575757;"></div>
<svg style="left:958.52px;top:354px" width="26.6" height="33" viewBox="0 0 26.6 33"><circle cx="13.3" cy="13.9" r="1.2" fill="#f2f2f2"/></svg>
<div class="t" style="left:970.32px;top:379.81px;font-size:6.6px;color:#cfcfcf;transform:scaleX(0.8200);transform-origin:0 0;">4</div>
<div class="a" style="left:985.65px;top:354.5px;width:25.7px;height:32.2px;background:#575757;"></div>
<svg style="left:985.15px;top:354px" width="26.6" height="33" viewBox="0 0 26.6 33"><circle cx="13.3" cy="13.9" r="1.45" fill="#f2f2f2"/></svg>
<div class="t" style="left:996.95px;top:379.81px;font-size:6.6px;color:#cfcfcf;transform:scaleX(0.8200);transform-origin:0 0;">5</div>
<div class="a" style="left:852.5px;top:387.6px;width:25.7px;height:32.2px;background:#575757;"></div>
<svg style="left:852px;top:387.1px" width="26.6" height="33" viewBox="0 0 26.6 33"><circle cx="13.3" cy="14" r="2.9" fill="#f2f2f2"/></svg>
<div class="t" style="left:862.29px;top:412.91px;font-size:6.6px;color:#cfcfcf;transform:scaleX(0.8200);transform-origin:0 0;">10</div>
<div class="a" style="left:879.13px;top:387.6px;width:25.7px;height:32.2px;background:#575757;"></div>
<svg style="left:878.63px;top:387.1px" width="26.6" height="33" viewBox="0 0 26.6 33"><circle cx="13.3" cy="14" r="3.45" fill="#f2f2f2"/></svg>
<div class="t" style="left:888.92px;top:412.91px;font-size:6.6px;color:#cfcfcf;transform:scaleX(0.8200);transform-origin:0 0;">12</div>
<div class="a" style="left:905.76px;top:387.6px;width:25.7px;height:32.2px;background:#575757;"></div>
<svg style="left:905.26px;top:387.1px" width="26.6" height="33" viewBox="0 0 26.6 33"><circle cx="13.3" cy="14" r="4.15" fill="#f2f2f2"/></svg>
<div class="t" style="left:915.55px;top:412.91px;font-size:6.6px;color:#cfcfcf;transform:scaleX(0.8200);transform-origin:0 0;">15</div>
<div class="a" style="left:932.39px;top:387.6px;width:25.7px;height:32.2px;background:#575757;"></div>
<svg style="left:931.89px;top:387.1px" width="26.6" height="33" viewBox="0 0 26.6 33"><circle cx="13.3" cy="14" r="5.4" fill="#f2f2f2"/></svg>
<div class="t" style="left:942.18px;top:412.91px;font-size:6.6px;color:#cfcfcf;transform:scaleX(0.8200);transform-origin:0 0;">20</div>
<div class="a" style="left:959.02px;top:387.6px;width:25.7px;height:32.2px;background:#575757;"></div>
<svg style="left:958.52px;top:387.1px" width="26.6" height="33" viewBox="0 0 26.6 33"><circle cx="13.3" cy="14" r="6.75" fill="#f2f2f2"/></svg>
<div class="t" style="left:968.81px;top:412.91px;font-size:6.6px;color:#cfcfcf;transform:scaleX(0.8200);transform-origin:0 0;">25</div>
<div class="a" style="left:985.65px;top:387.6px;width:25.7px;height:32.2px;background:#575757;"></div>
<svg style="left:985.15px;top:387.1px" width="26.6" height="33" viewBox="0 0 26.6 33"><circle cx="13.3" cy="14" r="8.1" fill="#f2f2f2"/></svg>
<div class="t" style="left:995.44px;top:412.91px;font-size:6.6px;color:#cfcfcf;transform:scaleX(0.8200);transform-origin:0 0;">30</div>
<div class="a" style="left:852.5px;top:420.7px;width:25.7px;height:32.2px;background:#575757;"></div>
<svg style="left:852px;top:420.2px" width="26.6" height="33" viewBox="0 0 26.6 33"><circle cx="13.3" cy="14" r="8.1" fill="#f2f2f2"/></svg>
<div class="t" style="left:862.29px;top:446.01px;font-size:6.6px;color:#cfcfcf;transform:scaleX(0.8200);transform-origin:0 0;">50</div>
<div class="a" style="left:879.13px;top:420.7px;width:25.7px;height:32.2px;background:#575757;"></div>
<svg style="left:878.63px;top:420.2px" width="26.6" height="33" viewBox="0 0 26.6 33"><circle cx="13.3" cy="14" r="8.1" fill="#f2f2f2"/></svg>
<div class="t" style="left:888.92px;top:446.01px;font-size:6.6px;color:#cfcfcf;transform:scaleX(0.8200);transform-origin:0 0;">70</div>
<div class="a" style="left:905.76px;top:420.7px;width:25.7px;height:32.2px;background:#575757;"></div>
<svg style="left:905.26px;top:420.2px" width="26.6" height="33" viewBox="0 0 26.6 33"><circle cx="13.3" cy="14" r="8.1" fill="#f2f2f2"/></svg>
<div class="t" style="left:914.05px;top:446.01px;font-size:6.6px;color:#cfcfcf;transform:scaleX(0.8200);transform-origin:0 0;">100</div>
<div class="a" style="left:932.39px;top:420.7px;width:25.7px;height:32.2px;background:#575757;"></div>
<svg style="left:931.89px;top:420.2px" width="26.6" height="33" viewBox="0 0 26.6 33"><circle cx="13.3" cy="14" r="8.1" fill="#f2f2f2"/></svg>
<div class="t" style="left:940.68px;top:446.01px;font-size:6.6px;color:#cfcfcf;transform:scaleX(0.8200);transform-origin:0 0;">150</div>
<div class="a" style="left:959.02px;top:420.7px;width:25.7px;height:32.2px;background:#575757;"></div>
<svg style="left:958.52px;top:420.2px" width="26.6" height="33" viewBox="0 0 26.6 33"><circle cx="13.3" cy="14" r="8.1" fill="#f2f2f2"/></svg>
<div class="t" style="left:967.31px;top:446.01px;font-size:6.6px;color:#cfcfcf;transform:scaleX(0.8200);transform-origin:0 0;">200</div>
<div class="a" style="left:985.65px;top:420.7px;width:25.7px;height:32.2px;background:#575757;"></div>
<svg style="left:985.15px;top:420.2px" width="26.6" height="33" viewBox="0 0 26.6 33"><circle cx="13.3" cy="14" r="8.1" fill="#f2f2f2"/></svg>
<div class="t" style="left:993.94px;top:446.01px;font-size:6.6px;color:#cfcfcf;transform:scaleX(0.8200);transform-origin:0 0;">300</div>
<div class="a" style="left:852.5px;top:453.8px;width:25.7px;height:32.2px;background:#575757;"></div>
<svg style="left:852px;top:453.3px" width="26.6" height="33" viewBox="0 0 26.6 33"><circle cx="13.3" cy="14" r="8.1" fill="#f2f2f2"/></svg>
<div class="t" style="left:860.79px;top:479.11px;font-size:6.6px;color:#cfcfcf;transform:scaleX(0.8200);transform-origin:0 0;">500</div>
<div class="a" style="left:879.13px;top:453.8px;width:25.7px;height:32.2px;background:#575757;"></div>
<svg style="left:878.63px;top:453.3px" width="26.6" height="33" viewBox="0 0 26.6 33"><circle cx="13.3" cy="14" r="8.1" fill="#f2f2f2"/></svg>
<div class="t" style="left:887.42px;top:479.11px;font-size:6.6px;color:#cfcfcf;transform:scaleX(0.8200);transform-origin:0 0;">700</div>
<div class="a" style="left:905.76px;top:453.8px;width:25.7px;height:32.2px;background:#575757;"></div>
<svg style="left:905.26px;top:453.3px" width="26.6" height="33" viewBox="0 0 26.6 33"><circle cx="13.3" cy="14" r="8.1" fill="#f2f2f2"/></svg>
<div class="t" style="left:912.54px;top:479.11px;font-size:6.6px;color:#cfcfcf;transform:scaleX(0.8200);transform-origin:0 0;">1000</div>
<div class="a" style="left:1013px;top:354px;width:10px;height:181.4px;background:#3a3a3a;"></div>
<div class="a" style="left:1013px;top:354px;width:10px;height:5.4px;background:#2c2c2c;"></div>
<div class="a" style="left:1013px;top:530px;width:10px;height:5.4px;background:#2c2c2c;"></div>
<div class="a" style="left:1013.8px;top:361px;width:8.4px;height:167.6px;background:#6e6e6e;border-radius:2.5px;"></div>
<svg style="left:1013px;top:354px" width="10" height="5" viewBox="0 0 10 5"><path d="M2.4,4.2L5,0.8L7.6,4.2Z" fill="#d0d0d0"/></svg>
<svg style="left:1013px;top:530.4px" width="10" height="5" viewBox="0 0 10 5"><path d="M2.4,0.8L5,4.2L7.6,0.8Z" fill="#d0d0d0"/></svg>
<div class="a" style="left:0px;top:548.6px;width:1024px;height:27.4px;background:linear-gradient(to right,#dedede 0px,#e4e4e4 40px,#e9e9e9 400px,#e9e9e9 730px,#dcdcdc 790px,#cdcdcd 826px,#d6d6d6 850px,#dedede 900px,#e2e2e2 1024px);"></div>
<div class="a" style="left:0px;top:548.6px;width:32.5px;height:27.4px;background:#dcdcdc;"></div>
<div class="a" style="left:32.5px;top:549.4px;width:228.2px;height:26.6px;background:#fbfbfb;box-shadow:inset 0 0 0 0.5px #d2d2d2;"></div>
<svg style="left:10.5px;top:557.4px" width="11" height="10.4" viewBox="0 0 11 10.4"><path d="M0,1.4L4.6,0.8V4.9H0ZM5.4,0.7L11,0V4.9H5.4ZM0,5.6H4.6V9.7L0,9.1ZM5.4,5.6H11V10.4L5.4,9.7Z" fill="#1c1c1c"/></svg>
<svg style="left:39.5px;top:556.5px" width="13" height="13" viewBox="0 0 13 13"><circle cx="7.6" cy="5" r="3.2" fill="none" stroke="#2a2a2a" stroke-width="1.1"/><path d="M5.4,7.4L1.4,11.4" stroke="#2a2a2a" stroke-width="1.2"/></svg>
<div class="t" style="left:59.00px;top:558.00px;font-size:9.8px;color:#3c3c3c;transform:scaleX(1.0287);transform-origin:0 0;">Nhập tại đây để tìm kiếm</div>
<svg style="left:271.5px;top:557px" width="12" height="10.4" viewBox="0 0 12 10.4"><path d="M2,2H7.6V8.4H2Z" fill="none" stroke="#3a3a3a" stroke-width="1.1"/><path d="M0.4,3V7.4M9.4,3V7.4" stroke="#3a3a3a" stroke-width="0.9"/><path d="M11,1.4V3M11,4.4V6M11,7.4V9" stroke="#3a3a3a" stroke-width="0.9"/></svg>
<svg style="left:305px;top:555.5px" width="13" height="13" viewBox="0 0 13 13"><circle cx="6.5" cy="6.5" r="5.6" fill="#7dc243"/><circle cx="6.5" cy="7" r="2.3" fill="#e9f5dc"/><path d="M6.5,4V1.2M8.4,4.8L10.4,2.6M9.2,6.6L11.8,6" stroke="#f2fae8" stroke-width="1"/></svg>
<div class="a" style="left:298px;top:574.4px;width:27px;height:1.6px;background:#2e2e2e;"></div>
<div class="a" style="left:358.8px;top:555.6px;width:12.8px;height:12.8px;background:#fafafa;border-radius:3px;"></div>
<svg style="left:359.2px;top:556px" width="12" height="12" viewBox="0 0 12 12"><circle cx="6" cy="6" r="4.9" fill="#26b7a6"/><path d="M6,1.1A4.9,4.9 0 0 1 10.9,6L6,6Z" fill="#f26a3a"/><path d="M1.1,6A4.9,4.9 0 0 1 6,1.1L6,6Z" fill="#e5433c"/><path d="M1.4,7.4C3.4,5.6 8.4,5.8 10.7,7.2A4.9,4.9 0 0 1 1.4,7.4Z" fill="#2aa8d8"/></svg>
<div class="a" style="left:352px;top:574.4px;width:27px;height:1.6px;background:#2e2e2e;"></div>
<svg style="left:391px;top:556px" width="13.4" height="13" viewBox="0 0 13.4 13"><rect x="0.4" y="0.6" width="12.4" height="12" rx="1.6" fill="#8fc0e8"/><rect x="1.8" y="2" width="9.6" height="9.2" rx="1" fill="#4a90d0"/><path d="M0.4,2L2.4,2V11.6H0.4Z" fill="#c8def2"/><circle cx="6.9" cy="6.6" r="3.4" fill="#f58a2a"/><path d="M5.8,4.8L9,6.6L5.8,8.4Z" fill="#fff"/></svg>
<div class="a" style="left:385px;top:574.4px;width:27px;height:1.6px;background:#2e2e2e;"></div>
<svg style="left:849.5px;top:559px" width="10" height="7" viewBox="0 0 10 7"><path d="M1,5.6L5,1.6L9,5.6" fill="none" stroke="#2a2a2a" stroke-width="1.1"/></svg>
<svg style="left:865.5px;top:560.2px" width="11.5" height="6.2" viewBox="0 0 11.5 6.2"><rect x="0.5" y="0.5" width="9.4" height="5.2" fill="none" stroke="#2a2a2a" stroke-width="0.9"/><rect x="1.4" y="1.4" width="5" height="3.4" fill="#2a2a2a"/><rect x="10.2" y="2" width="1" height="2.2" fill="#2a2a2a"/></svg>
<svg style="left:881.5px;top:558.6px" width="10" height="9" viewBox="0 0 10 9"><path d="M1,8.4A7.4,7.4 0 0 1 8.4,1" fill="none" stroke="#555" stroke-width="0.9"/><path d="M3.2,8.4A5.2,5.2 0 0 1 8.4,3.2" fill="none" stroke="#555" stroke-width="0.9"/><path d="M5.4,8.4A3,3 0 0 1 8.4,5.4" fill="none" stroke="#555" stroke-width="0.9"/><circle cx="8" cy="8" r="0.9" fill="#555"/></svg>
<svg style="left:897px;top:558.4px" width="16" height="9.4" viewBox="0 0 16 9.4"><rect x="0.5" y="0.5" width="15" height="8.4" rx="0.8" fill="none" stroke="#4a4a4a" stroke-width="0.9"/><path d="M2.4,3H13.6M2.4,4.8H13.6" stroke="#6a6a6a" stroke-width="0.8" stroke-dasharray="1 0.9"/><path d="M4,6.8H12" stroke="#6a6a6a" stroke-width="0.8"/></svg>
<div class="t" style="left:920.50px;top:559.06px;font-size:8.2px;color:#333;transform:scaleX(0.8160);transform-origin:0 0;">ENG</div>
<div class="t" style="left:950.05px;top:552.92px;font-size:8.6px;color:#333;transform:scaleX(0.8717);transform-origin:0 0;">6:19 CH</div>
<div class="t" style="left:944.50px;top:564.92px;font-size:8.6px;color:#333;transform:scaleX(0.9061);transform-origin:0 0;">13/12/2021</div>
<svg style="left:996.5px;top:557.2px" width="12" height="10" viewBox="0 0 12 10"><path d="M0.6,0.6H10.6V7.2H4.4L2.6,9V7.2H0.6Z" fill="#222"/><path d="M2.4,2.6H8.8M2.4,4.6H8.8" stroke="#e0e0e0" stroke-width="0.8"/></svg>
<div class="a" style="left:1002.6px;top:562.6px;width:10px;height:10px;border-radius:50%;background:#e4e4e4;box-shadow:inset 0 0 0 0.9px #333;"></div>
<div class="t" style="left:1004.30px;top:564.78px;font-size:6.4px;color:#222;font-weight:bold;transform:scaleX(0.9270);transform-origin:0 0;">10</div>
</div>
</body></html>
